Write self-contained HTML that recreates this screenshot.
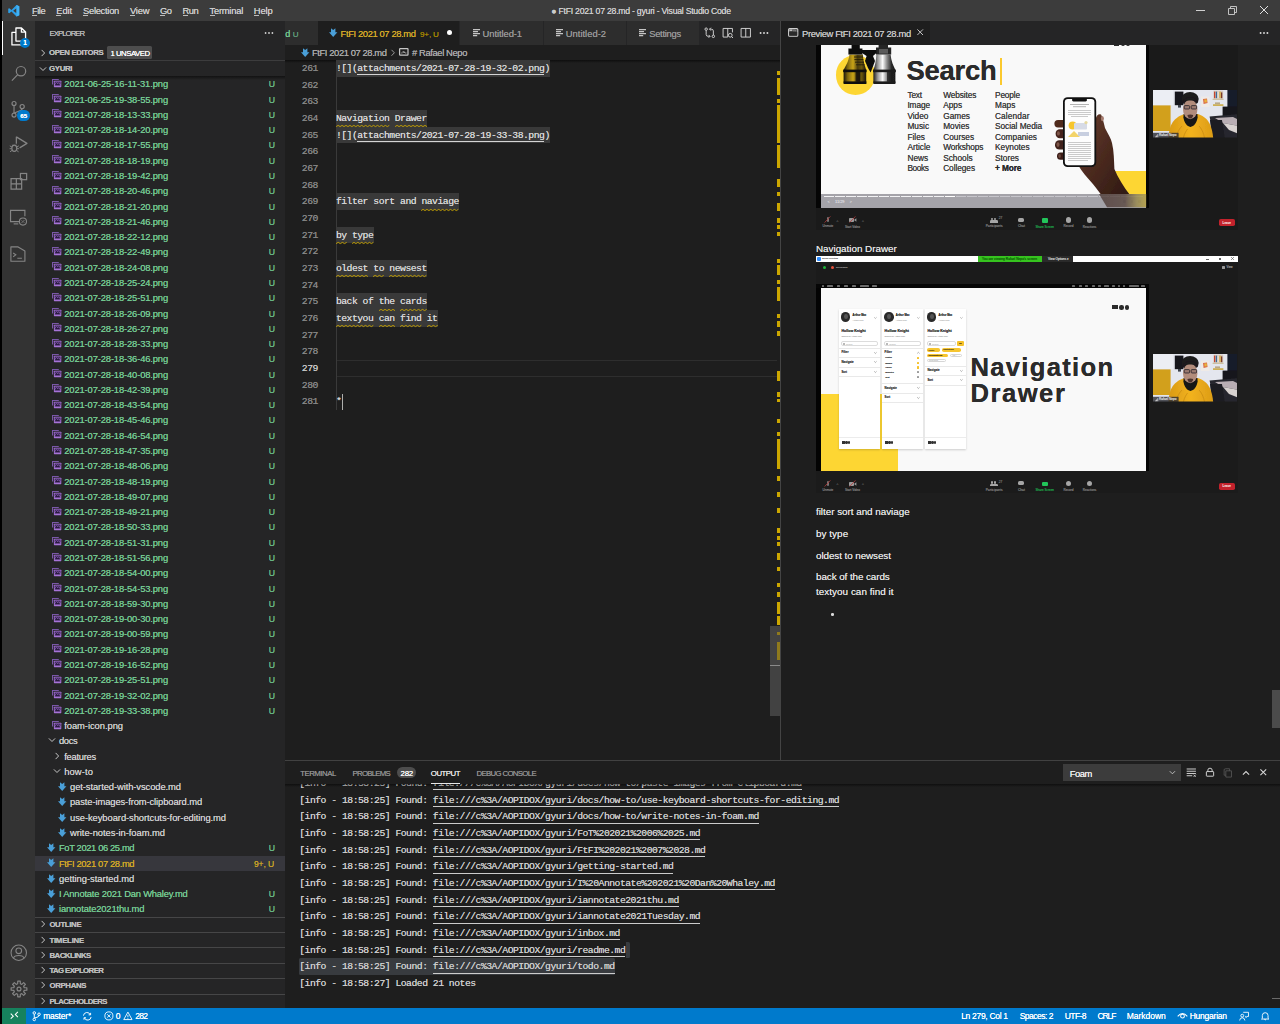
<!DOCTYPE html>
<html lang="en"><head><meta charset="utf-8"><title>FtFI 2021 07 28.md - gyuri - Visual Studio Code</title>
<style>
html,body{margin:0;padding:0;background:#1e1e1e;}
body{width:1280px;height:1024px;overflow:hidden;position:relative;font-family:"Liberation Sans",sans-serif;}
#app{position:absolute;left:0;top:0;width:1280px;height:1024px;overflow:hidden;}
#app div,#app span,#app svg{position:absolute;display:block;white-space:pre;}
#app svg{overflow:visible;}
#app span{text-shadow:0 0 0.4px;}
#app .clip{overflow:hidden;}
</style></head><body><div id="app">
<div style="left:0px;top:0px;width:2px;height:1024px;background:#000;"></div>
<div style="left:2px;top:0px;width:1278px;height:21px;background:#3c3c3c;"></div>
<div style="left:2px;top:21px;width:33px;height:987px;background:#333333;"></div>
<div style="left:35px;top:21px;width:250px;height:987px;background:#252526;"></div>
<div style="left:285px;top:21px;width:995px;height:987px;background:#1e1e1e;"></div>
<svg style="left:8px;top:5px;" width="11.5" height="11.5" viewBox="0 0 100 100"><path d="M74 1 L30 44 L11 29 L2 33 L2 67 L11 71 L30 56 L74 99 L98 89 L98 11 Z M74 29 L74 71 L45 50 Z" fill="#2d9fe8" fill-rule="evenodd"/><path d="M74 1 L98 11 L98 89 L74 99 Z" fill="#3fb1f5"/></svg>
<span style="left:32.00px;top:6.00px;font-size:9.4px;line-height:9.4px;color:#cccccc;letter-spacing:-0.477px;">File</span>
<div style="left:32px;top:15px;width:5.2px;height:0.8px;background:#bdbdbd;"></div>
<span style="left:56.30px;top:6.00px;font-size:9.4px;line-height:9.4px;color:#cccccc;letter-spacing:-0.114px;">Edit</span>
<div style="left:56.3px;top:15px;width:5.2px;height:0.8px;background:#bdbdbd;"></div>
<span style="left:83.00px;top:6.00px;font-size:9.4px;line-height:9.4px;color:#cccccc;letter-spacing:-0.286px;">Selection</span>
<div style="left:83px;top:15px;width:5.2px;height:0.8px;background:#bdbdbd;"></div>
<span style="left:130.00px;top:6.00px;font-size:9.4px;line-height:9.4px;color:#cccccc;letter-spacing:-0.214px;">View</span>
<div style="left:130px;top:15px;width:5.2px;height:0.8px;background:#bdbdbd;"></div>
<span style="left:160.00px;top:6.00px;font-size:9.4px;line-height:9.4px;color:#cccccc;letter-spacing:-0.608px;">Go</span>
<div style="left:160px;top:15px;width:5.2px;height:0.8px;background:#bdbdbd;"></div>
<span style="left:182.50px;top:6.00px;font-size:9.4px;line-height:9.4px;color:#cccccc;letter-spacing:-0.468px;">Run</span>
<div style="left:182.5px;top:15px;width:5.2px;height:0.8px;background:#bdbdbd;"></div>
<span style="left:209.50px;top:6.00px;font-size:9.4px;line-height:9.4px;color:#cccccc;letter-spacing:-0.242px;">Terminal</span>
<div style="left:209.5px;top:15px;width:5px;height:0.8px;background:#bdbdbd;"></div>
<span style="left:253.80px;top:6.00px;font-size:9.4px;line-height:9.4px;color:#cccccc;letter-spacing:-0.145px;">Help</span>
<div style="left:253.8px;top:15px;width:5.2px;height:0.8px;background:#bdbdbd;"></div>
<span style="left:551.30px;top:7.00px;font-size:8.7px;line-height:8.7px;color:#cccccc;letter-spacing:-0.245px;">● FtFI 2021 07 28.md - gyuri - Visual Studio Code</span>
<div style="left:1196px;top:9.5px;width:8.5px;height:1px;background:#d0d0d0;"></div>
<svg style="left:1228px;top:5.5px;" width="9" height="9" viewBox="0 0 9 9"><path d="M0.5 2.5 H6.5 V8.5 H0.5 Z M2.5 2.5 V0.5 H8.5 V6.5 H6.5" fill="none" stroke="#d0d0d0" stroke-width="0.9"/></svg>
<svg style="left:1260px;top:6px;" width="8" height="8" viewBox="0 0 8 8"><path d="M0 0 L8 8 M8 0 L0 8" stroke="#e0e0e0" stroke-width="1"/></svg>
<div style="left:2px;top:21px;width:1.3px;height:33.5px;background:#ffffff;"></div>
<svg style="left:9px;top:27.2px;" width="19.6" height="19.6" viewBox="0 0 24 24"><path d="M8.5 1.2 H15.3 L20.3 6.2 V17.3 H8.5 Z M15.2 1.4 V6.3 H20.2 M8.3 6.5 H3.6 V22 H15.3 V17.5" fill="none" stroke="#ffffff" stroke-width="1.6" stroke-linejoin="round"/></svg>
<div style="left:19.5px;top:37.5px;width:10.6px;height:10.6px;border-radius:50%;background:#007acc;"></div>
<span style="left:23.20px;top:40.00px;font-size:6.4px;line-height:6.4px;color:#fff;font-weight:700;">1</span>
<svg style="left:9.6px;top:63.8px;" width="18.2" height="18.2" viewBox="0 0 24 24"><circle cx="14.5" cy="9.5" r="6.2" fill="none" stroke="#858585" stroke-width="1.6"/><path d="M10.2 14 L2.5 22" stroke="#858585" stroke-width="1.6"/></svg>
<svg style="left:9.3px;top:100.2px;" width="18.6" height="18.6" viewBox="0 0 24 24"><circle cx="6.5" cy="4.5" r="2.6" fill="none" stroke="#858585" stroke-width="1.5"/><circle cx="6.5" cy="19.5" r="2.6" fill="none" stroke="#858585" stroke-width="1.5"/><circle cx="17" cy="8.5" r="2.7" fill="none" stroke="#858585" stroke-width="1.5"/><path d="M6.5 7.1 V16.9 M17 11.1 C17 15 11 14 7 17" fill="none" stroke="#858585" stroke-width="1.5"/></svg>
<div style="left:17.2px;top:110.2px;width:13px;height:10.4px;border-radius:5.2px;background:#007acc;"></div>
<span style="left:20.20px;top:113.00px;font-size:6.2px;line-height:6.2px;color:#fff;font-weight:700;">65</span>
<svg style="left:8.6px;top:134.2px;" width="19.6" height="19.6" viewBox="0 0 24 24"><path d="M9 3.5 L22 11.5 L13 17" fill="none" stroke="#858585" stroke-width="1.5" stroke-linejoin="round"/><path d="M9 3.5 V12" stroke="#858585" stroke-width="1.5"/><ellipse cx="6.5" cy="17.5" rx="3" ry="3.8" fill="none" stroke="#858585" stroke-width="1.4"/><path d="M1 14.5 L3.5 16 M12 14.5 L9.5 16 M0.8 18 H3.4 M9.6 18 H12.2 M1.3 21.8 L3.8 20 M11.7 21.8 L9.2 20 M4.3 13.2 L5.2 14.2 M8.7 13.2 L7.8 14.2" stroke="#858585" stroke-width="1.2"/></svg>
<svg style="left:8.6px;top:171.6px;" width="19.6" height="19.6" viewBox="0 0 24 24"><path d="M2.5 8 H15.5 V21 H2.5 Z M9 8 V21 M2.5 14.5 H15.5" fill="none" stroke="#858585" stroke-width="1.5"/><rect x="14" y="1.8" width="7.6" height="7.6" fill="none" stroke="#858585" stroke-width="1.5"/></svg>
<svg style="left:8.8px;top:208.2px;" width="18.6" height="18.6" viewBox="0 0 24 24"><path d="M14 17.5 H2 V3 H20.5 V10.5" fill="none" stroke="#858585" stroke-width="1.5"/><path d="M6 20.5 H12" stroke="#858585" stroke-width="1.5"/><circle cx="18" cy="17.5" r="4.6" fill="none" stroke="#858585" stroke-width="1.4"/><path d="M16 19.5 L20 15.5 M16.2 16 L17.6 17.4 M18.4 17.6 L19.8 19" stroke="#858585" stroke-width="1"/></svg>
<svg style="left:9px;top:244.6px;" width="18.2" height="18.2" viewBox="0 0 24 24"><path d="M2.5 2.5 H12 L21 8 V21.5 H2.5 Z" fill="none" stroke="#858585" stroke-width="1.5" stroke-linejoin="round"/><path d="M5.5 10.5 L9 13 L5.5 15.5 M11 17.5 H17" fill="none" stroke="#858585" stroke-width="1.4"/></svg>
<svg style="left:10px;top:943.5px;" width="17.5" height="17.5" viewBox="0 0 24 24"><circle cx="12" cy="12" r="10.6" fill="none" stroke="#858585" stroke-width="1.5"/><circle cx="12" cy="9.3" r="3.9" fill="none" stroke="#858585" stroke-width="1.5"/><path d="M4.8 19.5 C6 14.5 18 14.5 19.2 19.5" fill="none" stroke="#858585" stroke-width="1.5"/></svg>
<svg style="left:10px;top:979.5px;" width="18" height="18" viewBox="0 0 24 24"><path d="M22.47 10.34 L22.47 13.66 L18.97 13.79 L18.20 15.67 L20.58 18.23 L18.23 20.58 L15.67 18.20 L13.79 18.97 L13.66 22.47 L10.34 22.47 L10.21 18.97 L8.33 18.20 L5.77 20.58 L3.42 18.23 L5.80 15.67 L5.03 13.79 L1.53 13.66 L1.53 10.34 L5.03 10.21 L5.80 8.33 L3.42 5.77 L5.77 3.42 L8.33 5.80 L10.21 5.03 L10.34 1.53 L13.66 1.53 L13.79 5.03 L15.67 5.80 L18.23 3.42 L20.58 5.77 L18.20 8.33 L18.97 10.21 Z" fill="none" stroke="#858585" stroke-width="1.6" stroke-linejoin="round"/><circle cx="12" cy="12" r="2.6" fill="none" stroke="#858585" stroke-width="1.6"/></svg>
<span style="left:49.50px;top:30.00px;font-size:7.8px;line-height:7.8px;color:#bbbbbb;letter-spacing:-0.971px;">EXPLORER</span>
<svg style="left:263.8px;top:31.2px;" width="10" height="4" viewBox="0 0 10 4"><circle cx="1.6" cy="2" r="0.9" fill="#d0d0d0"/><circle cx="5" cy="2" r="0.9" fill="#d0d0d0"/><circle cx="8.4" cy="2" r="0.9" fill="#d0d0d0"/></svg>
<svg style="left:40.2px;top:48.6px;" width="6" height="8" viewBox="0 0 6 8"><path d="M1.6 0.9 L4.6 4 L1.6 7.1" fill="none" stroke="#c5c5c5" stroke-width="1"/></svg>
<span style="left:49.00px;top:49.00px;font-size:7.8px;line-height:7.8px;color:#bbbbbb;font-weight:700;letter-spacing:-0.373px;">OPEN EDITORS</span>
<div style="left:107px;top:46.4px;width:45px;height:12.6px;background:#4d4d4d;border-radius:1.5px;"></div>
<span style="left:110.40px;top:50.00px;font-size:7.8px;line-height:7.8px;color:#ffffff;letter-spacing:-0.492px;">1 UNSAVED</span>
<div style="left:35px;top:60.3px;width:250px;height:0.8px;background:#3c3c3d;"></div>
<svg style="left:39px;top:65.7px;" width="8" height="6" viewBox="0 0 8 6"><path d="M0.9 1.4 L4 4.5 L7.1 1.4" fill="none" stroke="#c5c5c5" stroke-width="1"/></svg>
<span style="left:49.00px;top:65.00px;font-size:7.8px;line-height:7.8px;color:#bbbbbb;font-weight:700;letter-spacing:-0.301px;">GYURI</span>
<div style="left:35px;top:76.2px;width:250px;height:3.5px;background:linear-gradient(#0f0f0f,rgba(15,15,15,0));opacity:.85"></div>
<svg style="left:51.8px;top:78.9192px;" width="9.4" height="8.4" viewBox="0 0 9.4 8.4"><path d="M0.55 5.6 V0.55 H6.8" fill="none" stroke="#7a58a8" stroke-width="1.1"/><rect x="1.9" y="1.7" width="7.4" height="6.5" rx="0.5" fill="#a673d6"/><path d="M2.6 5.6 L4.4 3.2 L5.6 4.6 L6.6 3.6 L8.6 5.8 L8.6 4.2 L8.6 2.4 L2.6 2.4 Z" fill="#3b2558" opacity=".9"/><path d="M2.6 6.6 L4.4 3.6 L5.6 5 L6.6 4 L8.6 6.4 Z" fill="#2a1a40"/></svg>
<span style="left:64.30px;top:79.00px;font-size:9.4px;line-height:9.4px;color:#73c991;letter-spacing:-0.107px;">2021-06-25-16-11-31.png</span>
<span style="left:268.80px;top:80.00px;font-size:8.7px;line-height:8.7px;color:#69b985;letter-spacing:-1.181px;">U</span>
<svg style="left:51.8px;top:94.1975px;" width="9.4" height="8.4" viewBox="0 0 9.4 8.4"><path d="M0.55 5.6 V0.55 H6.8" fill="none" stroke="#7a58a8" stroke-width="1.1"/><rect x="1.9" y="1.7" width="7.4" height="6.5" rx="0.5" fill="#a673d6"/><path d="M2.6 5.6 L4.4 3.2 L5.6 4.6 L6.6 3.6 L8.6 5.8 L8.6 4.2 L8.6 2.4 L2.6 2.4 Z" fill="#3b2558" opacity=".9"/><path d="M2.6 6.6 L4.4 3.6 L5.6 5 L6.6 4 L8.6 6.4 Z" fill="#2a1a40"/></svg>
<span style="left:64.30px;top:95.00px;font-size:9.4px;line-height:9.4px;color:#73c991;letter-spacing:-0.137px;">2021-06-25-19-38-55.png</span>
<span style="left:268.80px;top:96.00px;font-size:8.7px;line-height:8.7px;color:#69b985;letter-spacing:-1.181px;">U</span>
<svg style="left:51.8px;top:109.476px;" width="9.4" height="8.4" viewBox="0 0 9.4 8.4"><path d="M0.55 5.6 V0.55 H6.8" fill="none" stroke="#7a58a8" stroke-width="1.1"/><rect x="1.9" y="1.7" width="7.4" height="6.5" rx="0.5" fill="#a673d6"/><path d="M2.6 5.6 L4.4 3.2 L5.6 4.6 L6.6 3.6 L8.6 5.8 L8.6 4.2 L8.6 2.4 L2.6 2.4 Z" fill="#3b2558" opacity=".9"/><path d="M2.6 6.6 L4.4 3.6 L5.6 5 L6.6 4 L8.6 6.4 Z" fill="#2a1a40"/></svg>
<span style="left:64.30px;top:110.00px;font-size:9.4px;line-height:9.4px;color:#73c991;letter-spacing:-0.137px;">2021-07-28-18-13-33.png</span>
<span style="left:268.80px;top:111.00px;font-size:8.7px;line-height:8.7px;color:#69b985;letter-spacing:-1.181px;">U</span>
<svg style="left:51.8px;top:124.754px;" width="9.4" height="8.4" viewBox="0 0 9.4 8.4"><path d="M0.55 5.6 V0.55 H6.8" fill="none" stroke="#7a58a8" stroke-width="1.1"/><rect x="1.9" y="1.7" width="7.4" height="6.5" rx="0.5" fill="#a673d6"/><path d="M2.6 5.6 L4.4 3.2 L5.6 4.6 L6.6 3.6 L8.6 5.8 L8.6 4.2 L8.6 2.4 L2.6 2.4 Z" fill="#3b2558" opacity=".9"/><path d="M2.6 6.6 L4.4 3.6 L5.6 5 L6.6 4 L8.6 6.4 Z" fill="#2a1a40"/></svg>
<span style="left:64.30px;top:125.00px;font-size:9.4px;line-height:9.4px;color:#73c991;letter-spacing:-0.137px;">2021-07-28-18-14-20.png</span>
<span style="left:268.80px;top:126.00px;font-size:8.7px;line-height:8.7px;color:#69b985;letter-spacing:-1.181px;">U</span>
<svg style="left:51.8px;top:140.032px;" width="9.4" height="8.4" viewBox="0 0 9.4 8.4"><path d="M0.55 5.6 V0.55 H6.8" fill="none" stroke="#7a58a8" stroke-width="1.1"/><rect x="1.9" y="1.7" width="7.4" height="6.5" rx="0.5" fill="#a673d6"/><path d="M2.6 5.6 L4.4 3.2 L5.6 4.6 L6.6 3.6 L8.6 5.8 L8.6 4.2 L8.6 2.4 L2.6 2.4 Z" fill="#3b2558" opacity=".9"/><path d="M2.6 6.6 L4.4 3.6 L5.6 5 L6.6 4 L8.6 6.4 Z" fill="#2a1a40"/></svg>
<span style="left:64.30px;top:140.00px;font-size:9.4px;line-height:9.4px;color:#73c991;letter-spacing:-0.137px;">2021-07-28-18-17-55.png</span>
<span style="left:268.80px;top:141.00px;font-size:8.7px;line-height:8.7px;color:#69b985;letter-spacing:-1.181px;">U</span>
<svg style="left:51.8px;top:155.311px;" width="9.4" height="8.4" viewBox="0 0 9.4 8.4"><path d="M0.55 5.6 V0.55 H6.8" fill="none" stroke="#7a58a8" stroke-width="1.1"/><rect x="1.9" y="1.7" width="7.4" height="6.5" rx="0.5" fill="#a673d6"/><path d="M2.6 5.6 L4.4 3.2 L5.6 4.6 L6.6 3.6 L8.6 5.8 L8.6 4.2 L8.6 2.4 L2.6 2.4 Z" fill="#3b2558" opacity=".9"/><path d="M2.6 6.6 L4.4 3.6 L5.6 5 L6.6 4 L8.6 6.4 Z" fill="#2a1a40"/></svg>
<span style="left:64.30px;top:156.00px;font-size:9.4px;line-height:9.4px;color:#73c991;letter-spacing:-0.137px;">2021-07-28-18-18-19.png</span>
<span style="left:268.80px;top:157.00px;font-size:8.7px;line-height:8.7px;color:#69b985;letter-spacing:-1.181px;">U</span>
<svg style="left:51.8px;top:170.589px;" width="9.4" height="8.4" viewBox="0 0 9.4 8.4"><path d="M0.55 5.6 V0.55 H6.8" fill="none" stroke="#7a58a8" stroke-width="1.1"/><rect x="1.9" y="1.7" width="7.4" height="6.5" rx="0.5" fill="#a673d6"/><path d="M2.6 5.6 L4.4 3.2 L5.6 4.6 L6.6 3.6 L8.6 5.8 L8.6 4.2 L8.6 2.4 L2.6 2.4 Z" fill="#3b2558" opacity=".9"/><path d="M2.6 6.6 L4.4 3.6 L5.6 5 L6.6 4 L8.6 6.4 Z" fill="#2a1a40"/></svg>
<span style="left:64.30px;top:171.00px;font-size:9.4px;line-height:9.4px;color:#73c991;letter-spacing:-0.137px;">2021-07-28-18-19-42.png</span>
<span style="left:268.80px;top:172.00px;font-size:8.7px;line-height:8.7px;color:#69b985;letter-spacing:-1.181px;">U</span>
<svg style="left:51.8px;top:185.867px;" width="9.4" height="8.4" viewBox="0 0 9.4 8.4"><path d="M0.55 5.6 V0.55 H6.8" fill="none" stroke="#7a58a8" stroke-width="1.1"/><rect x="1.9" y="1.7" width="7.4" height="6.5" rx="0.5" fill="#a673d6"/><path d="M2.6 5.6 L4.4 3.2 L5.6 4.6 L6.6 3.6 L8.6 5.8 L8.6 4.2 L8.6 2.4 L2.6 2.4 Z" fill="#3b2558" opacity=".9"/><path d="M2.6 6.6 L4.4 3.6 L5.6 5 L6.6 4 L8.6 6.4 Z" fill="#2a1a40"/></svg>
<span style="left:64.30px;top:186.00px;font-size:9.4px;line-height:9.4px;color:#73c991;letter-spacing:-0.137px;">2021-07-28-18-20-46.png</span>
<span style="left:268.80px;top:187.00px;font-size:8.7px;line-height:8.7px;color:#69b985;letter-spacing:-1.181px;">U</span>
<svg style="left:51.8px;top:201.146px;" width="9.4" height="8.4" viewBox="0 0 9.4 8.4"><path d="M0.55 5.6 V0.55 H6.8" fill="none" stroke="#7a58a8" stroke-width="1.1"/><rect x="1.9" y="1.7" width="7.4" height="6.5" rx="0.5" fill="#a673d6"/><path d="M2.6 5.6 L4.4 3.2 L5.6 4.6 L6.6 3.6 L8.6 5.8 L8.6 4.2 L8.6 2.4 L2.6 2.4 Z" fill="#3b2558" opacity=".9"/><path d="M2.6 6.6 L4.4 3.6 L5.6 5 L6.6 4 L8.6 6.4 Z" fill="#2a1a40"/></svg>
<span style="left:64.30px;top:202.00px;font-size:9.4px;line-height:9.4px;color:#73c991;letter-spacing:-0.137px;">2021-07-28-18-21-20.png</span>
<span style="left:268.80px;top:203.00px;font-size:8.7px;line-height:8.7px;color:#69b985;letter-spacing:-1.181px;">U</span>
<svg style="left:51.8px;top:216.424px;" width="9.4" height="8.4" viewBox="0 0 9.4 8.4"><path d="M0.55 5.6 V0.55 H6.8" fill="none" stroke="#7a58a8" stroke-width="1.1"/><rect x="1.9" y="1.7" width="7.4" height="6.5" rx="0.5" fill="#a673d6"/><path d="M2.6 5.6 L4.4 3.2 L5.6 4.6 L6.6 3.6 L8.6 5.8 L8.6 4.2 L8.6 2.4 L2.6 2.4 Z" fill="#3b2558" opacity=".9"/><path d="M2.6 6.6 L4.4 3.6 L5.6 5 L6.6 4 L8.6 6.4 Z" fill="#2a1a40"/></svg>
<span style="left:64.30px;top:217.00px;font-size:9.4px;line-height:9.4px;color:#73c991;letter-spacing:-0.137px;">2021-07-28-18-21-46.png</span>
<span style="left:268.80px;top:218.00px;font-size:8.7px;line-height:8.7px;color:#69b985;letter-spacing:-1.181px;">U</span>
<svg style="left:51.8px;top:231.702px;" width="9.4" height="8.4" viewBox="0 0 9.4 8.4"><path d="M0.55 5.6 V0.55 H6.8" fill="none" stroke="#7a58a8" stroke-width="1.1"/><rect x="1.9" y="1.7" width="7.4" height="6.5" rx="0.5" fill="#a673d6"/><path d="M2.6 5.6 L4.4 3.2 L5.6 4.6 L6.6 3.6 L8.6 5.8 L8.6 4.2 L8.6 2.4 L2.6 2.4 Z" fill="#3b2558" opacity=".9"/><path d="M2.6 6.6 L4.4 3.6 L5.6 5 L6.6 4 L8.6 6.4 Z" fill="#2a1a40"/></svg>
<span style="left:64.30px;top:232.00px;font-size:9.4px;line-height:9.4px;color:#73c991;letter-spacing:-0.137px;">2021-07-28-18-22-12.png</span>
<span style="left:268.80px;top:233.00px;font-size:8.7px;line-height:8.7px;color:#69b985;letter-spacing:-1.181px;">U</span>
<svg style="left:51.8px;top:246.98px;" width="9.4" height="8.4" viewBox="0 0 9.4 8.4"><path d="M0.55 5.6 V0.55 H6.8" fill="none" stroke="#7a58a8" stroke-width="1.1"/><rect x="1.9" y="1.7" width="7.4" height="6.5" rx="0.5" fill="#a673d6"/><path d="M2.6 5.6 L4.4 3.2 L5.6 4.6 L6.6 3.6 L8.6 5.8 L8.6 4.2 L8.6 2.4 L2.6 2.4 Z" fill="#3b2558" opacity=".9"/><path d="M2.6 6.6 L4.4 3.6 L5.6 5 L6.6 4 L8.6 6.4 Z" fill="#2a1a40"/></svg>
<span style="left:64.30px;top:247.00px;font-size:9.4px;line-height:9.4px;color:#73c991;letter-spacing:-0.137px;">2021-07-28-18-22-49.png</span>
<span style="left:268.80px;top:248.00px;font-size:8.7px;line-height:8.7px;color:#69b985;letter-spacing:-1.181px;">U</span>
<svg style="left:51.8px;top:262.259px;" width="9.4" height="8.4" viewBox="0 0 9.4 8.4"><path d="M0.55 5.6 V0.55 H6.8" fill="none" stroke="#7a58a8" stroke-width="1.1"/><rect x="1.9" y="1.7" width="7.4" height="6.5" rx="0.5" fill="#a673d6"/><path d="M2.6 5.6 L4.4 3.2 L5.6 4.6 L6.6 3.6 L8.6 5.8 L8.6 4.2 L8.6 2.4 L2.6 2.4 Z" fill="#3b2558" opacity=".9"/><path d="M2.6 6.6 L4.4 3.6 L5.6 5 L6.6 4 L8.6 6.4 Z" fill="#2a1a40"/></svg>
<span style="left:64.30px;top:263.00px;font-size:9.4px;line-height:9.4px;color:#73c991;letter-spacing:-0.137px;">2021-07-28-18-24-08.png</span>
<span style="left:268.80px;top:264.00px;font-size:8.7px;line-height:8.7px;color:#69b985;letter-spacing:-1.181px;">U</span>
<svg style="left:51.8px;top:277.537px;" width="9.4" height="8.4" viewBox="0 0 9.4 8.4"><path d="M0.55 5.6 V0.55 H6.8" fill="none" stroke="#7a58a8" stroke-width="1.1"/><rect x="1.9" y="1.7" width="7.4" height="6.5" rx="0.5" fill="#a673d6"/><path d="M2.6 5.6 L4.4 3.2 L5.6 4.6 L6.6 3.6 L8.6 5.8 L8.6 4.2 L8.6 2.4 L2.6 2.4 Z" fill="#3b2558" opacity=".9"/><path d="M2.6 6.6 L4.4 3.6 L5.6 5 L6.6 4 L8.6 6.4 Z" fill="#2a1a40"/></svg>
<span style="left:64.30px;top:278.00px;font-size:9.4px;line-height:9.4px;color:#73c991;letter-spacing:-0.137px;">2021-07-28-18-25-24.png</span>
<span style="left:268.80px;top:279.00px;font-size:8.7px;line-height:8.7px;color:#69b985;letter-spacing:-1.181px;">U</span>
<svg style="left:51.8px;top:292.815px;" width="9.4" height="8.4" viewBox="0 0 9.4 8.4"><path d="M0.55 5.6 V0.55 H6.8" fill="none" stroke="#7a58a8" stroke-width="1.1"/><rect x="1.9" y="1.7" width="7.4" height="6.5" rx="0.5" fill="#a673d6"/><path d="M2.6 5.6 L4.4 3.2 L5.6 4.6 L6.6 3.6 L8.6 5.8 L8.6 4.2 L8.6 2.4 L2.6 2.4 Z" fill="#3b2558" opacity=".9"/><path d="M2.6 6.6 L4.4 3.6 L5.6 5 L6.6 4 L8.6 6.4 Z" fill="#2a1a40"/></svg>
<span style="left:64.30px;top:293.00px;font-size:9.4px;line-height:9.4px;color:#73c991;letter-spacing:-0.137px;">2021-07-28-18-25-51.png</span>
<span style="left:268.80px;top:294.00px;font-size:8.7px;line-height:8.7px;color:#69b985;letter-spacing:-1.181px;">U</span>
<svg style="left:51.8px;top:308.094px;" width="9.4" height="8.4" viewBox="0 0 9.4 8.4"><path d="M0.55 5.6 V0.55 H6.8" fill="none" stroke="#7a58a8" stroke-width="1.1"/><rect x="1.9" y="1.7" width="7.4" height="6.5" rx="0.5" fill="#a673d6"/><path d="M2.6 5.6 L4.4 3.2 L5.6 4.6 L6.6 3.6 L8.6 5.8 L8.6 4.2 L8.6 2.4 L2.6 2.4 Z" fill="#3b2558" opacity=".9"/><path d="M2.6 6.6 L4.4 3.6 L5.6 5 L6.6 4 L8.6 6.4 Z" fill="#2a1a40"/></svg>
<span style="left:64.30px;top:309.00px;font-size:9.4px;line-height:9.4px;color:#73c991;letter-spacing:-0.137px;">2021-07-28-18-26-09.png</span>
<span style="left:268.80px;top:310.00px;font-size:8.7px;line-height:8.7px;color:#69b985;letter-spacing:-1.181px;">U</span>
<svg style="left:51.8px;top:323.372px;" width="9.4" height="8.4" viewBox="0 0 9.4 8.4"><path d="M0.55 5.6 V0.55 H6.8" fill="none" stroke="#7a58a8" stroke-width="1.1"/><rect x="1.9" y="1.7" width="7.4" height="6.5" rx="0.5" fill="#a673d6"/><path d="M2.6 5.6 L4.4 3.2 L5.6 4.6 L6.6 3.6 L8.6 5.8 L8.6 4.2 L8.6 2.4 L2.6 2.4 Z" fill="#3b2558" opacity=".9"/><path d="M2.6 6.6 L4.4 3.6 L5.6 5 L6.6 4 L8.6 6.4 Z" fill="#2a1a40"/></svg>
<span style="left:64.30px;top:324.00px;font-size:9.4px;line-height:9.4px;color:#73c991;letter-spacing:-0.137px;">2021-07-28-18-26-27.png</span>
<span style="left:268.80px;top:325.00px;font-size:8.7px;line-height:8.7px;color:#69b985;letter-spacing:-1.181px;">U</span>
<svg style="left:51.8px;top:338.65px;" width="9.4" height="8.4" viewBox="0 0 9.4 8.4"><path d="M0.55 5.6 V0.55 H6.8" fill="none" stroke="#7a58a8" stroke-width="1.1"/><rect x="1.9" y="1.7" width="7.4" height="6.5" rx="0.5" fill="#a673d6"/><path d="M2.6 5.6 L4.4 3.2 L5.6 4.6 L6.6 3.6 L8.6 5.8 L8.6 4.2 L8.6 2.4 L2.6 2.4 Z" fill="#3b2558" opacity=".9"/><path d="M2.6 6.6 L4.4 3.6 L5.6 5 L6.6 4 L8.6 6.4 Z" fill="#2a1a40"/></svg>
<span style="left:64.30px;top:339.00px;font-size:9.4px;line-height:9.4px;color:#73c991;letter-spacing:-0.137px;">2021-07-28-18-28-33.png</span>
<span style="left:268.80px;top:340.00px;font-size:8.7px;line-height:8.7px;color:#69b985;letter-spacing:-1.181px;">U</span>
<svg style="left:51.8px;top:353.929px;" width="9.4" height="8.4" viewBox="0 0 9.4 8.4"><path d="M0.55 5.6 V0.55 H6.8" fill="none" stroke="#7a58a8" stroke-width="1.1"/><rect x="1.9" y="1.7" width="7.4" height="6.5" rx="0.5" fill="#a673d6"/><path d="M2.6 5.6 L4.4 3.2 L5.6 4.6 L6.6 3.6 L8.6 5.8 L8.6 4.2 L8.6 2.4 L2.6 2.4 Z" fill="#3b2558" opacity=".9"/><path d="M2.6 6.6 L4.4 3.6 L5.6 5 L6.6 4 L8.6 6.4 Z" fill="#2a1a40"/></svg>
<span style="left:64.30px;top:354.00px;font-size:9.4px;line-height:9.4px;color:#73c991;letter-spacing:-0.137px;">2021-07-28-18-36-46.png</span>
<span style="left:268.80px;top:355.00px;font-size:8.7px;line-height:8.7px;color:#69b985;letter-spacing:-1.181px;">U</span>
<svg style="left:51.8px;top:369.207px;" width="9.4" height="8.4" viewBox="0 0 9.4 8.4"><path d="M0.55 5.6 V0.55 H6.8" fill="none" stroke="#7a58a8" stroke-width="1.1"/><rect x="1.9" y="1.7" width="7.4" height="6.5" rx="0.5" fill="#a673d6"/><path d="M2.6 5.6 L4.4 3.2 L5.6 4.6 L6.6 3.6 L8.6 5.8 L8.6 4.2 L8.6 2.4 L2.6 2.4 Z" fill="#3b2558" opacity=".9"/><path d="M2.6 6.6 L4.4 3.6 L5.6 5 L6.6 4 L8.6 6.4 Z" fill="#2a1a40"/></svg>
<span style="left:64.30px;top:370.00px;font-size:9.4px;line-height:9.4px;color:#73c991;letter-spacing:-0.137px;">2021-07-28-18-40-08.png</span>
<span style="left:268.80px;top:371.00px;font-size:8.7px;line-height:8.7px;color:#69b985;letter-spacing:-1.181px;">U</span>
<svg style="left:51.8px;top:384.485px;" width="9.4" height="8.4" viewBox="0 0 9.4 8.4"><path d="M0.55 5.6 V0.55 H6.8" fill="none" stroke="#7a58a8" stroke-width="1.1"/><rect x="1.9" y="1.7" width="7.4" height="6.5" rx="0.5" fill="#a673d6"/><path d="M2.6 5.6 L4.4 3.2 L5.6 4.6 L6.6 3.6 L8.6 5.8 L8.6 4.2 L8.6 2.4 L2.6 2.4 Z" fill="#3b2558" opacity=".9"/><path d="M2.6 6.6 L4.4 3.6 L5.6 5 L6.6 4 L8.6 6.4 Z" fill="#2a1a40"/></svg>
<span style="left:64.30px;top:385.00px;font-size:9.4px;line-height:9.4px;color:#73c991;letter-spacing:-0.137px;">2021-07-28-18-42-39.png</span>
<span style="left:268.80px;top:386.00px;font-size:8.7px;line-height:8.7px;color:#69b985;letter-spacing:-1.181px;">U</span>
<svg style="left:51.8px;top:399.763px;" width="9.4" height="8.4" viewBox="0 0 9.4 8.4"><path d="M0.55 5.6 V0.55 H6.8" fill="none" stroke="#7a58a8" stroke-width="1.1"/><rect x="1.9" y="1.7" width="7.4" height="6.5" rx="0.5" fill="#a673d6"/><path d="M2.6 5.6 L4.4 3.2 L5.6 4.6 L6.6 3.6 L8.6 5.8 L8.6 4.2 L8.6 2.4 L2.6 2.4 Z" fill="#3b2558" opacity=".9"/><path d="M2.6 6.6 L4.4 3.6 L5.6 5 L6.6 4 L8.6 6.4 Z" fill="#2a1a40"/></svg>
<span style="left:64.30px;top:400.00px;font-size:9.4px;line-height:9.4px;color:#73c991;letter-spacing:-0.137px;">2021-07-28-18-43-54.png</span>
<span style="left:268.80px;top:401.00px;font-size:8.7px;line-height:8.7px;color:#69b985;letter-spacing:-1.181px;">U</span>
<svg style="left:51.8px;top:415.042px;" width="9.4" height="8.4" viewBox="0 0 9.4 8.4"><path d="M0.55 5.6 V0.55 H6.8" fill="none" stroke="#7a58a8" stroke-width="1.1"/><rect x="1.9" y="1.7" width="7.4" height="6.5" rx="0.5" fill="#a673d6"/><path d="M2.6 5.6 L4.4 3.2 L5.6 4.6 L6.6 3.6 L8.6 5.8 L8.6 4.2 L8.6 2.4 L2.6 2.4 Z" fill="#3b2558" opacity=".9"/><path d="M2.6 6.6 L4.4 3.6 L5.6 5 L6.6 4 L8.6 6.4 Z" fill="#2a1a40"/></svg>
<span style="left:64.30px;top:415.00px;font-size:9.4px;line-height:9.4px;color:#73c991;letter-spacing:-0.137px;">2021-07-28-18-45-46.png</span>
<span style="left:268.80px;top:416.00px;font-size:8.7px;line-height:8.7px;color:#69b985;letter-spacing:-1.181px;">U</span>
<svg style="left:51.8px;top:430.32px;" width="9.4" height="8.4" viewBox="0 0 9.4 8.4"><path d="M0.55 5.6 V0.55 H6.8" fill="none" stroke="#7a58a8" stroke-width="1.1"/><rect x="1.9" y="1.7" width="7.4" height="6.5" rx="0.5" fill="#a673d6"/><path d="M2.6 5.6 L4.4 3.2 L5.6 4.6 L6.6 3.6 L8.6 5.8 L8.6 4.2 L8.6 2.4 L2.6 2.4 Z" fill="#3b2558" opacity=".9"/><path d="M2.6 6.6 L4.4 3.6 L5.6 5 L6.6 4 L8.6 6.4 Z" fill="#2a1a40"/></svg>
<span style="left:64.30px;top:431.00px;font-size:9.4px;line-height:9.4px;color:#73c991;letter-spacing:-0.137px;">2021-07-28-18-46-54.png</span>
<span style="left:268.80px;top:432.00px;font-size:8.7px;line-height:8.7px;color:#69b985;letter-spacing:-1.181px;">U</span>
<svg style="left:51.8px;top:445.598px;" width="9.4" height="8.4" viewBox="0 0 9.4 8.4"><path d="M0.55 5.6 V0.55 H6.8" fill="none" stroke="#7a58a8" stroke-width="1.1"/><rect x="1.9" y="1.7" width="7.4" height="6.5" rx="0.5" fill="#a673d6"/><path d="M2.6 5.6 L4.4 3.2 L5.6 4.6 L6.6 3.6 L8.6 5.8 L8.6 4.2 L8.6 2.4 L2.6 2.4 Z" fill="#3b2558" opacity=".9"/><path d="M2.6 6.6 L4.4 3.6 L5.6 5 L6.6 4 L8.6 6.4 Z" fill="#2a1a40"/></svg>
<span style="left:64.30px;top:446.00px;font-size:9.4px;line-height:9.4px;color:#73c991;letter-spacing:-0.137px;">2021-07-28-18-47-35.png</span>
<span style="left:268.80px;top:447.00px;font-size:8.7px;line-height:8.7px;color:#69b985;letter-spacing:-1.181px;">U</span>
<svg style="left:51.8px;top:460.877px;" width="9.4" height="8.4" viewBox="0 0 9.4 8.4"><path d="M0.55 5.6 V0.55 H6.8" fill="none" stroke="#7a58a8" stroke-width="1.1"/><rect x="1.9" y="1.7" width="7.4" height="6.5" rx="0.5" fill="#a673d6"/><path d="M2.6 5.6 L4.4 3.2 L5.6 4.6 L6.6 3.6 L8.6 5.8 L8.6 4.2 L8.6 2.4 L2.6 2.4 Z" fill="#3b2558" opacity=".9"/><path d="M2.6 6.6 L4.4 3.6 L5.6 5 L6.6 4 L8.6 6.4 Z" fill="#2a1a40"/></svg>
<span style="left:64.30px;top:461.00px;font-size:9.4px;line-height:9.4px;color:#73c991;letter-spacing:-0.137px;">2021-07-28-18-48-06.png</span>
<span style="left:268.80px;top:462.00px;font-size:8.7px;line-height:8.7px;color:#69b985;letter-spacing:-1.181px;">U</span>
<svg style="left:51.8px;top:476.155px;" width="9.4" height="8.4" viewBox="0 0 9.4 8.4"><path d="M0.55 5.6 V0.55 H6.8" fill="none" stroke="#7a58a8" stroke-width="1.1"/><rect x="1.9" y="1.7" width="7.4" height="6.5" rx="0.5" fill="#a673d6"/><path d="M2.6 5.6 L4.4 3.2 L5.6 4.6 L6.6 3.6 L8.6 5.8 L8.6 4.2 L8.6 2.4 L2.6 2.4 Z" fill="#3b2558" opacity=".9"/><path d="M2.6 6.6 L4.4 3.6 L5.6 5 L6.6 4 L8.6 6.4 Z" fill="#2a1a40"/></svg>
<span style="left:64.30px;top:477.00px;font-size:9.4px;line-height:9.4px;color:#73c991;letter-spacing:-0.137px;">2021-07-28-18-48-19.png</span>
<span style="left:268.80px;top:478.00px;font-size:8.7px;line-height:8.7px;color:#69b985;letter-spacing:-1.181px;">U</span>
<svg style="left:51.8px;top:491.433px;" width="9.4" height="8.4" viewBox="0 0 9.4 8.4"><path d="M0.55 5.6 V0.55 H6.8" fill="none" stroke="#7a58a8" stroke-width="1.1"/><rect x="1.9" y="1.7" width="7.4" height="6.5" rx="0.5" fill="#a673d6"/><path d="M2.6 5.6 L4.4 3.2 L5.6 4.6 L6.6 3.6 L8.6 5.8 L8.6 4.2 L8.6 2.4 L2.6 2.4 Z" fill="#3b2558" opacity=".9"/><path d="M2.6 6.6 L4.4 3.6 L5.6 5 L6.6 4 L8.6 6.4 Z" fill="#2a1a40"/></svg>
<span style="left:64.30px;top:492.00px;font-size:9.4px;line-height:9.4px;color:#73c991;letter-spacing:-0.137px;">2021-07-28-18-49-07.png</span>
<span style="left:268.80px;top:493.00px;font-size:8.7px;line-height:8.7px;color:#69b985;letter-spacing:-1.181px;">U</span>
<svg style="left:51.8px;top:506.712px;" width="9.4" height="8.4" viewBox="0 0 9.4 8.4"><path d="M0.55 5.6 V0.55 H6.8" fill="none" stroke="#7a58a8" stroke-width="1.1"/><rect x="1.9" y="1.7" width="7.4" height="6.5" rx="0.5" fill="#a673d6"/><path d="M2.6 5.6 L4.4 3.2 L5.6 4.6 L6.6 3.6 L8.6 5.8 L8.6 4.2 L8.6 2.4 L2.6 2.4 Z" fill="#3b2558" opacity=".9"/><path d="M2.6 6.6 L4.4 3.6 L5.6 5 L6.6 4 L8.6 6.4 Z" fill="#2a1a40"/></svg>
<span style="left:64.30px;top:507.00px;font-size:9.4px;line-height:9.4px;color:#73c991;letter-spacing:-0.137px;">2021-07-28-18-49-21.png</span>
<span style="left:268.80px;top:508.00px;font-size:8.7px;line-height:8.7px;color:#69b985;letter-spacing:-1.181px;">U</span>
<svg style="left:51.8px;top:521.99px;" width="9.4" height="8.4" viewBox="0 0 9.4 8.4"><path d="M0.55 5.6 V0.55 H6.8" fill="none" stroke="#7a58a8" stroke-width="1.1"/><rect x="1.9" y="1.7" width="7.4" height="6.5" rx="0.5" fill="#a673d6"/><path d="M2.6 5.6 L4.4 3.2 L5.6 4.6 L6.6 3.6 L8.6 5.8 L8.6 4.2 L8.6 2.4 L2.6 2.4 Z" fill="#3b2558" opacity=".9"/><path d="M2.6 6.6 L4.4 3.6 L5.6 5 L6.6 4 L8.6 6.4 Z" fill="#2a1a40"/></svg>
<span style="left:64.30px;top:522.00px;font-size:9.4px;line-height:9.4px;color:#73c991;letter-spacing:-0.137px;">2021-07-28-18-50-33.png</span>
<span style="left:268.80px;top:523.00px;font-size:8.7px;line-height:8.7px;color:#69b985;letter-spacing:-1.181px;">U</span>
<svg style="left:51.8px;top:537.268px;" width="9.4" height="8.4" viewBox="0 0 9.4 8.4"><path d="M0.55 5.6 V0.55 H6.8" fill="none" stroke="#7a58a8" stroke-width="1.1"/><rect x="1.9" y="1.7" width="7.4" height="6.5" rx="0.5" fill="#a673d6"/><path d="M2.6 5.6 L4.4 3.2 L5.6 4.6 L6.6 3.6 L8.6 5.8 L8.6 4.2 L8.6 2.4 L2.6 2.4 Z" fill="#3b2558" opacity=".9"/><path d="M2.6 6.6 L4.4 3.6 L5.6 5 L6.6 4 L8.6 6.4 Z" fill="#2a1a40"/></svg>
<span style="left:64.30px;top:538.00px;font-size:9.4px;line-height:9.4px;color:#73c991;letter-spacing:-0.137px;">2021-07-28-18-51-31.png</span>
<span style="left:268.80px;top:539.00px;font-size:8.7px;line-height:8.7px;color:#69b985;letter-spacing:-1.181px;">U</span>
<svg style="left:51.8px;top:552.546px;" width="9.4" height="8.4" viewBox="0 0 9.4 8.4"><path d="M0.55 5.6 V0.55 H6.8" fill="none" stroke="#7a58a8" stroke-width="1.1"/><rect x="1.9" y="1.7" width="7.4" height="6.5" rx="0.5" fill="#a673d6"/><path d="M2.6 5.6 L4.4 3.2 L5.6 4.6 L6.6 3.6 L8.6 5.8 L8.6 4.2 L8.6 2.4 L2.6 2.4 Z" fill="#3b2558" opacity=".9"/><path d="M2.6 6.6 L4.4 3.6 L5.6 5 L6.6 4 L8.6 6.4 Z" fill="#2a1a40"/></svg>
<span style="left:64.30px;top:553.00px;font-size:9.4px;line-height:9.4px;color:#73c991;letter-spacing:-0.137px;">2021-07-28-18-51-56.png</span>
<span style="left:268.80px;top:554.00px;font-size:8.7px;line-height:8.7px;color:#69b985;letter-spacing:-1.181px;">U</span>
<svg style="left:51.8px;top:567.825px;" width="9.4" height="8.4" viewBox="0 0 9.4 8.4"><path d="M0.55 5.6 V0.55 H6.8" fill="none" stroke="#7a58a8" stroke-width="1.1"/><rect x="1.9" y="1.7" width="7.4" height="6.5" rx="0.5" fill="#a673d6"/><path d="M2.6 5.6 L4.4 3.2 L5.6 4.6 L6.6 3.6 L8.6 5.8 L8.6 4.2 L8.6 2.4 L2.6 2.4 Z" fill="#3b2558" opacity=".9"/><path d="M2.6 6.6 L4.4 3.6 L5.6 5 L6.6 4 L8.6 6.4 Z" fill="#2a1a40"/></svg>
<span style="left:64.30px;top:568.00px;font-size:9.4px;line-height:9.4px;color:#73c991;letter-spacing:-0.137px;">2021-07-28-18-54-00.png</span>
<span style="left:268.80px;top:569.00px;font-size:8.7px;line-height:8.7px;color:#69b985;letter-spacing:-1.181px;">U</span>
<svg style="left:51.8px;top:583.103px;" width="9.4" height="8.4" viewBox="0 0 9.4 8.4"><path d="M0.55 5.6 V0.55 H6.8" fill="none" stroke="#7a58a8" stroke-width="1.1"/><rect x="1.9" y="1.7" width="7.4" height="6.5" rx="0.5" fill="#a673d6"/><path d="M2.6 5.6 L4.4 3.2 L5.6 4.6 L6.6 3.6 L8.6 5.8 L8.6 4.2 L8.6 2.4 L2.6 2.4 Z" fill="#3b2558" opacity=".9"/><path d="M2.6 6.6 L4.4 3.6 L5.6 5 L6.6 4 L8.6 6.4 Z" fill="#2a1a40"/></svg>
<span style="left:64.30px;top:584.00px;font-size:9.4px;line-height:9.4px;color:#73c991;letter-spacing:-0.137px;">2021-07-28-18-54-53.png</span>
<span style="left:268.80px;top:585.00px;font-size:8.7px;line-height:8.7px;color:#69b985;letter-spacing:-1.181px;">U</span>
<svg style="left:51.8px;top:598.381px;" width="9.4" height="8.4" viewBox="0 0 9.4 8.4"><path d="M0.55 5.6 V0.55 H6.8" fill="none" stroke="#7a58a8" stroke-width="1.1"/><rect x="1.9" y="1.7" width="7.4" height="6.5" rx="0.5" fill="#a673d6"/><path d="M2.6 5.6 L4.4 3.2 L5.6 4.6 L6.6 3.6 L8.6 5.8 L8.6 4.2 L8.6 2.4 L2.6 2.4 Z" fill="#3b2558" opacity=".9"/><path d="M2.6 6.6 L4.4 3.6 L5.6 5 L6.6 4 L8.6 6.4 Z" fill="#2a1a40"/></svg>
<span style="left:64.30px;top:599.00px;font-size:9.4px;line-height:9.4px;color:#73c991;letter-spacing:-0.137px;">2021-07-28-18-59-30.png</span>
<span style="left:268.80px;top:600.00px;font-size:8.7px;line-height:8.7px;color:#69b985;letter-spacing:-1.181px;">U</span>
<svg style="left:51.8px;top:613.66px;" width="9.4" height="8.4" viewBox="0 0 9.4 8.4"><path d="M0.55 5.6 V0.55 H6.8" fill="none" stroke="#7a58a8" stroke-width="1.1"/><rect x="1.9" y="1.7" width="7.4" height="6.5" rx="0.5" fill="#a673d6"/><path d="M2.6 5.6 L4.4 3.2 L5.6 4.6 L6.6 3.6 L8.6 5.8 L8.6 4.2 L8.6 2.4 L2.6 2.4 Z" fill="#3b2558" opacity=".9"/><path d="M2.6 6.6 L4.4 3.6 L5.6 5 L6.6 4 L8.6 6.4 Z" fill="#2a1a40"/></svg>
<span style="left:64.30px;top:614.00px;font-size:9.4px;line-height:9.4px;color:#73c991;letter-spacing:-0.137px;">2021-07-28-19-00-30.png</span>
<span style="left:268.80px;top:615.00px;font-size:8.7px;line-height:8.7px;color:#69b985;letter-spacing:-1.181px;">U</span>
<svg style="left:51.8px;top:628.938px;" width="9.4" height="8.4" viewBox="0 0 9.4 8.4"><path d="M0.55 5.6 V0.55 H6.8" fill="none" stroke="#7a58a8" stroke-width="1.1"/><rect x="1.9" y="1.7" width="7.4" height="6.5" rx="0.5" fill="#a673d6"/><path d="M2.6 5.6 L4.4 3.2 L5.6 4.6 L6.6 3.6 L8.6 5.8 L8.6 4.2 L8.6 2.4 L2.6 2.4 Z" fill="#3b2558" opacity=".9"/><path d="M2.6 6.6 L4.4 3.6 L5.6 5 L6.6 4 L8.6 6.4 Z" fill="#2a1a40"/></svg>
<span style="left:64.30px;top:629.00px;font-size:9.4px;line-height:9.4px;color:#73c991;letter-spacing:-0.137px;">2021-07-28-19-00-59.png</span>
<span style="left:268.80px;top:630.00px;font-size:8.7px;line-height:8.7px;color:#69b985;letter-spacing:-1.181px;">U</span>
<svg style="left:51.8px;top:644.216px;" width="9.4" height="8.4" viewBox="0 0 9.4 8.4"><path d="M0.55 5.6 V0.55 H6.8" fill="none" stroke="#7a58a8" stroke-width="1.1"/><rect x="1.9" y="1.7" width="7.4" height="6.5" rx="0.5" fill="#a673d6"/><path d="M2.6 5.6 L4.4 3.2 L5.6 4.6 L6.6 3.6 L8.6 5.8 L8.6 4.2 L8.6 2.4 L2.6 2.4 Z" fill="#3b2558" opacity=".9"/><path d="M2.6 6.6 L4.4 3.6 L5.6 5 L6.6 4 L8.6 6.4 Z" fill="#2a1a40"/></svg>
<span style="left:64.30px;top:645.00px;font-size:9.4px;line-height:9.4px;color:#73c991;letter-spacing:-0.137px;">2021-07-28-19-16-28.png</span>
<span style="left:268.80px;top:646.00px;font-size:8.7px;line-height:8.7px;color:#69b985;letter-spacing:-1.181px;">U</span>
<svg style="left:51.8px;top:659.495px;" width="9.4" height="8.4" viewBox="0 0 9.4 8.4"><path d="M0.55 5.6 V0.55 H6.8" fill="none" stroke="#7a58a8" stroke-width="1.1"/><rect x="1.9" y="1.7" width="7.4" height="6.5" rx="0.5" fill="#a673d6"/><path d="M2.6 5.6 L4.4 3.2 L5.6 4.6 L6.6 3.6 L8.6 5.8 L8.6 4.2 L8.6 2.4 L2.6 2.4 Z" fill="#3b2558" opacity=".9"/><path d="M2.6 6.6 L4.4 3.6 L5.6 5 L6.6 4 L8.6 6.4 Z" fill="#2a1a40"/></svg>
<span style="left:64.30px;top:660.00px;font-size:9.4px;line-height:9.4px;color:#73c991;letter-spacing:-0.137px;">2021-07-28-19-16-52.png</span>
<span style="left:268.80px;top:661.00px;font-size:8.7px;line-height:8.7px;color:#69b985;letter-spacing:-1.181px;">U</span>
<svg style="left:51.8px;top:674.773px;" width="9.4" height="8.4" viewBox="0 0 9.4 8.4"><path d="M0.55 5.6 V0.55 H6.8" fill="none" stroke="#7a58a8" stroke-width="1.1"/><rect x="1.9" y="1.7" width="7.4" height="6.5" rx="0.5" fill="#a673d6"/><path d="M2.6 5.6 L4.4 3.2 L5.6 4.6 L6.6 3.6 L8.6 5.8 L8.6 4.2 L8.6 2.4 L2.6 2.4 Z" fill="#3b2558" opacity=".9"/><path d="M2.6 6.6 L4.4 3.6 L5.6 5 L6.6 4 L8.6 6.4 Z" fill="#2a1a40"/></svg>
<span style="left:64.30px;top:675.00px;font-size:9.4px;line-height:9.4px;color:#73c991;letter-spacing:-0.137px;">2021-07-28-19-25-51.png</span>
<span style="left:268.80px;top:676.00px;font-size:8.7px;line-height:8.7px;color:#69b985;letter-spacing:-1.181px;">U</span>
<svg style="left:51.8px;top:690.051px;" width="9.4" height="8.4" viewBox="0 0 9.4 8.4"><path d="M0.55 5.6 V0.55 H6.8" fill="none" stroke="#7a58a8" stroke-width="1.1"/><rect x="1.9" y="1.7" width="7.4" height="6.5" rx="0.5" fill="#a673d6"/><path d="M2.6 5.6 L4.4 3.2 L5.6 4.6 L6.6 3.6 L8.6 5.8 L8.6 4.2 L8.6 2.4 L2.6 2.4 Z" fill="#3b2558" opacity=".9"/><path d="M2.6 6.6 L4.4 3.6 L5.6 5 L6.6 4 L8.6 6.4 Z" fill="#2a1a40"/></svg>
<span style="left:64.30px;top:691.00px;font-size:9.4px;line-height:9.4px;color:#73c991;letter-spacing:-0.137px;">2021-07-28-19-32-02.png</span>
<span style="left:268.80px;top:692.00px;font-size:8.7px;line-height:8.7px;color:#69b985;letter-spacing:-1.181px;">U</span>
<svg style="left:51.8px;top:705.329px;" width="9.4" height="8.4" viewBox="0 0 9.4 8.4"><path d="M0.55 5.6 V0.55 H6.8" fill="none" stroke="#7a58a8" stroke-width="1.1"/><rect x="1.9" y="1.7" width="7.4" height="6.5" rx="0.5" fill="#a673d6"/><path d="M2.6 5.6 L4.4 3.2 L5.6 4.6 L6.6 3.6 L8.6 5.8 L8.6 4.2 L8.6 2.4 L2.6 2.4 Z" fill="#3b2558" opacity=".9"/><path d="M2.6 6.6 L4.4 3.6 L5.6 5 L6.6 4 L8.6 6.4 Z" fill="#2a1a40"/></svg>
<span style="left:64.30px;top:706.00px;font-size:9.4px;line-height:9.4px;color:#73c991;letter-spacing:-0.137px;">2021-07-28-19-33-38.png</span>
<span style="left:268.80px;top:707.00px;font-size:8.7px;line-height:8.7px;color:#69b985;letter-spacing:-1.181px;">U</span>
<svg style="left:51.8px;top:720.608px;" width="9.4" height="8.4" viewBox="0 0 9.4 8.4"><path d="M0.55 5.6 V0.55 H6.8" fill="none" stroke="#7a58a8" stroke-width="1.1"/><rect x="1.9" y="1.7" width="7.4" height="6.5" rx="0.5" fill="#a673d6"/><path d="M2.6 5.6 L4.4 3.2 L5.6 4.6 L6.6 3.6 L8.6 5.8 L8.6 4.2 L8.6 2.4 L2.6 2.4 Z" fill="#3b2558" opacity=".9"/><path d="M2.6 6.6 L4.4 3.6 L5.6 5 L6.6 4 L8.6 6.4 Z" fill="#2a1a40"/></svg>
<span style="left:64.20px;top:721.00px;font-size:9.4px;line-height:9.4px;color:#cccccc;letter-spacing:-0.048px;">foam-icon.png</span>
<svg style="left:47.5px;top:737.286px;" width="8" height="6" viewBox="0 0 8 6"><path d="M0.9 1.4 L4 4.5 L7.1 1.4" fill="none" stroke="#c5c5c5" stroke-width="1"/></svg>
<span style="left:59.00px;top:736.00px;font-size:9.4px;line-height:9.4px;color:#cccccc;letter-spacing:-0.353px;">docs</span>
<svg style="left:53.8px;top:751.764px;" width="6" height="8" viewBox="0 0 6 8"><path d="M1.6 0.9 L4.6 4 L1.6 7.1" fill="none" stroke="#c5c5c5" stroke-width="1"/></svg>
<span style="left:64.20px;top:752.00px;font-size:9.4px;line-height:9.4px;color:#cccccc;letter-spacing:-0.259px;">features</span>
<svg style="left:52.6px;top:767.843px;" width="8" height="6" viewBox="0 0 8 6"><path d="M0.9 1.4 L4 4.5 L7.1 1.4" fill="none" stroke="#c5c5c5" stroke-width="1"/></svg>
<span style="left:64.20px;top:767.00px;font-size:9.4px;line-height:9.4px;color:#cccccc;letter-spacing:0.110px;">how-to</span>
<svg style="left:58px;top:782.021px;" width="8.4" height="9" viewBox="0 0 8.4 9"><path d="M2 0.2 L4.2 1.9 L6.4 0.2 V4.2 H8.4 L4.2 8.9 L0 4.2 H2 Z" fill="#4a9fd8"/></svg>
<span style="left:70.00px;top:782.00px;font-size:9.4px;line-height:9.4px;color:#cccccc;letter-spacing:-0.080px;">get-started-with-vscode.md</span>
<svg style="left:58px;top:797.299px;" width="8.4" height="9" viewBox="0 0 8.4 9"><path d="M2 0.2 L4.2 1.9 L6.4 0.2 V4.2 H8.4 L4.2 8.9 L0 4.2 H2 Z" fill="#4a9fd8"/></svg>
<span style="left:70.00px;top:797.00px;font-size:9.4px;line-height:9.4px;color:#cccccc;letter-spacing:-0.098px;">paste-images-from-clipboard.md</span>
<svg style="left:58px;top:812.578px;" width="8.4" height="9" viewBox="0 0 8.4 9"><path d="M2 0.2 L4.2 1.9 L6.4 0.2 V4.2 H8.4 L4.2 8.9 L0 4.2 H2 Z" fill="#4a9fd8"/></svg>
<span style="left:70.00px;top:813.00px;font-size:9.4px;line-height:9.4px;color:#cccccc;letter-spacing:-0.065px;">use-keyboard-shortcuts-for-editing.md</span>
<svg style="left:58px;top:827.856px;" width="8.4" height="9" viewBox="0 0 8.4 9"><path d="M2 0.2 L4.2 1.9 L6.4 0.2 V4.2 H8.4 L4.2 8.9 L0 4.2 H2 Z" fill="#4a9fd8"/></svg>
<span style="left:70.00px;top:828.00px;font-size:9.4px;line-height:9.4px;color:#cccccc;letter-spacing:-0.040px;">write-notes-in-foam.md</span>
<div style="left:35px;top:855.9px;width:250px;height:15.1px;background:#37373d;"></div>
<svg style="left:47.2px;top:843.134px;" width="8.4" height="9" viewBox="0 0 8.4 9"><path d="M2 0.2 L4.2 1.9 L6.4 0.2 V4.2 H8.4 L4.2 8.9 L0 4.2 H2 Z" fill="#4a9fd8"/></svg>
<span style="left:59.00px;top:843.00px;font-size:9.4px;line-height:9.4px;color:#73c991;letter-spacing:-0.380px;">FoT 2021 06 25.md</span>
<span style="left:268.80px;top:844.00px;font-size:8.7px;line-height:8.7px;color:#69b985;letter-spacing:-1.181px;">U</span>
<svg style="left:47.2px;top:858.412px;" width="8.4" height="9" viewBox="0 0 8.4 9"><path d="M2 0.2 L4.2 1.9 L6.4 0.2 V4.2 H8.4 L4.2 8.9 L0 4.2 H2 Z" fill="#4a9fd8"/></svg>
<span style="left:59.00px;top:859.00px;font-size:9.4px;line-height:9.4px;color:#d3a827;letter-spacing:-0.368px;">FtFI 2021 07 28.md</span>
<span style="left:254.00px;top:860.00px;font-size:8.5px;line-height:8.5px;color:#c9a326;letter-spacing:-0.133px;">9+, U</span>
<svg style="left:47.2px;top:873.691px;" width="8.4" height="9" viewBox="0 0 8.4 9"><path d="M2 0.2 L4.2 1.9 L6.4 0.2 V4.2 H8.4 L4.2 8.9 L0 4.2 H2 Z" fill="#4a9fd8"/></svg>
<span style="left:59.00px;top:874.00px;font-size:9.4px;line-height:9.4px;color:#cccccc;letter-spacing:-0.020px;">getting-started.md</span>
<svg style="left:47.2px;top:888.969px;" width="8.4" height="9" viewBox="0 0 8.4 9"><path d="M2 0.2 L4.2 1.9 L6.4 0.2 V4.2 H8.4 L4.2 8.9 L0 4.2 H2 Z" fill="#4a9fd8"/></svg>
<span style="left:59.00px;top:889.00px;font-size:9.4px;line-height:9.4px;color:#73c991;letter-spacing:-0.196px;">I Annotate 2021 Dan Whaley.md</span>
<span style="left:268.80px;top:890.00px;font-size:8.7px;line-height:8.7px;color:#69b985;letter-spacing:-1.181px;">U</span>
<svg style="left:47.2px;top:904.247px;" width="8.4" height="9" viewBox="0 0 8.4 9"><path d="M2 0.2 L4.2 1.9 L6.4 0.2 V4.2 H8.4 L4.2 8.9 L0 4.2 H2 Z" fill="#4a9fd8"/></svg>
<span style="left:59.00px;top:904.00px;font-size:9.4px;line-height:9.4px;color:#73c991;letter-spacing:-0.152px;">iannotate2021thu.md</span>
<span style="left:268.80px;top:905.00px;font-size:8.7px;line-height:8.7px;color:#69b985;letter-spacing:-1.181px;">U</span>
<div style="left:35px;top:917.3px;width:250px;height:0.8px;background:#464647;"></div>
<svg style="left:40.2px;top:920.1px;" width="6" height="8" viewBox="0 0 6 8"><path d="M1.6 0.9 L4.6 4 L1.6 7.1" fill="none" stroke="#c5c5c5" stroke-width="1"/></svg>
<span style="left:49.40px;top:921.00px;font-size:7.8px;line-height:7.8px;color:#bbbbbb;font-weight:700;letter-spacing:-0.331px;">OUTLINE</span>
<div style="left:35px;top:932.3px;width:250px;height:0.8px;background:#464647;"></div>
<svg style="left:40.2px;top:936.1px;" width="6" height="8" viewBox="0 0 6 8"><path d="M1.6 0.9 L4.6 4 L1.6 7.1" fill="none" stroke="#c5c5c5" stroke-width="1"/></svg>
<span style="left:49.40px;top:937.00px;font-size:7.8px;line-height:7.8px;color:#bbbbbb;font-weight:700;letter-spacing:-0.224px;">TIMELINE</span>
<div style="left:35px;top:947.2px;width:250px;height:0.8px;background:#464647;"></div>
<svg style="left:40.2px;top:951.1px;" width="6" height="8" viewBox="0 0 6 8"><path d="M1.6 0.9 L4.6 4 L1.6 7.1" fill="none" stroke="#c5c5c5" stroke-width="1"/></svg>
<span style="left:49.40px;top:952.00px;font-size:7.8px;line-height:7.8px;color:#bbbbbb;font-weight:700;letter-spacing:-0.502px;">BACKLINKS</span>
<div style="left:35px;top:962.7px;width:250px;height:0.8px;background:#464647;"></div>
<svg style="left:40.2px;top:966.1px;" width="6" height="8" viewBox="0 0 6 8"><path d="M1.6 0.9 L4.6 4 L1.6 7.1" fill="none" stroke="#c5c5c5" stroke-width="1"/></svg>
<span style="left:49.40px;top:967.00px;font-size:7.8px;line-height:7.8px;color:#bbbbbb;font-weight:700;letter-spacing:-0.586px;">TAG EXPLORER</span>
<div style="left:35px;top:978px;width:250px;height:0.8px;background:#464647;"></div>
<svg style="left:40.2px;top:981.1px;" width="6" height="8" viewBox="0 0 6 8"><path d="M1.6 0.9 L4.6 4 L1.6 7.1" fill="none" stroke="#c5c5c5" stroke-width="1"/></svg>
<span style="left:49.40px;top:982.00px;font-size:7.8px;line-height:7.8px;color:#bbbbbb;font-weight:700;letter-spacing:-0.314px;">ORPHANS</span>
<div style="left:35px;top:993.6px;width:250px;height:0.8px;background:#464647;"></div>
<svg style="left:40.2px;top:997.1px;" width="6" height="8" viewBox="0 0 6 8"><path d="M1.6 0.9 L4.6 4 L1.6 7.1" fill="none" stroke="#c5c5c5" stroke-width="1"/></svg>
<span style="left:49.40px;top:998.00px;font-size:7.8px;line-height:7.8px;color:#bbbbbb;font-weight:700;letter-spacing:-0.579px;">PLACEHOLDERS</span>
<div style="left:285px;top:21px;width:495px;height:24px;background:#252526;"></div>
<div style="left:285px;top:21px;width:32.6px;height:24px;background:#2d2d2d;"></div>
<span style="left:285.20px;top:30.00px;font-size:9px;line-height:9px;color:#73c991;">d</span>
<span style="left:292.80px;top:31.00px;font-size:8.1px;line-height:8.1px;color:#5f9b78;">U</span>
<div style="left:318.2px;top:21px;width:141.2px;height:24px;background:#1e1e1e;"></div>
<svg style="left:328.6px;top:28px;" width="8.4" height="9" viewBox="0 0 8.4 9"><path d="M2 0.2 L4.2 1.9 L6.4 0.2 V4.2 H8.4 L4.2 8.9 L0 4.2 H2 Z" fill="#4a9fd8"/></svg>
<span style="left:340.60px;top:29.00px;font-size:9.4px;line-height:9.4px;color:#d3a827;letter-spacing:-0.379px;">FtFI 2021 07 28.md</span>
<span style="left:420.00px;top:31.00px;font-size:8.1px;line-height:8.1px;color:#a48600;letter-spacing:-0.156px;">9+, U</span>
<div style="left:446.6px;top:29.8px;width:5.6px;height:5.6px;background:#ffffff;border-radius:50%;"></div>
<div style="left:460.2px;top:21px;width:82.5px;height:24px;background:#2d2d2d;"></div>
<svg style="left:472.6px;top:29.1px;" width="7" height="7.4" viewBox="0 0 7 7.4"><path d="M0 0.7 H7 M0 2.7 H5 M0 4.7 H7 M0 6.7 H4.2" stroke="#c5c5c5" stroke-width="1.15"/></svg>
<span style="left:482.60px;top:29.00px;font-size:9.4px;line-height:9.4px;color:#969696;letter-spacing:-0.073px;">Untitled-1</span>
<div style="left:543.5px;top:21px;width:82.5px;height:24px;background:#2d2d2d;"></div>
<svg style="left:555.8px;top:29.1px;" width="7" height="7.4" viewBox="0 0 7 7.4"><path d="M0 0.7 H7 M0 2.7 H5 M0 4.7 H7 M0 6.7 H4.2" stroke="#c5c5c5" stroke-width="1.15"/></svg>
<span style="left:565.80px;top:29.00px;font-size:9.4px;line-height:9.4px;color:#969696;letter-spacing:0.008px;">Untitled-2</span>
<div style="left:627px;top:21px;width:72px;height:24px;background:#2d2d2d;"></div>
<svg style="left:638.8px;top:29.1px;" width="7" height="7.4" viewBox="0 0 7 7.4"><path d="M0 0.7 H7 M0 2.7 H5 M0 4.7 H7 M0 6.7 H4.2" stroke="#c5c5c5" stroke-width="1.15"/></svg>
<span style="left:649.20px;top:29.00px;font-size:9.4px;line-height:9.4px;color:#969696;letter-spacing:-0.284px;">Settings</span>
<svg style="left:703.5px;top:27px;" width="11.5" height="11.5" viewBox="0 0 16 16"><circle cx="3" cy="3" r="1.7" fill="none" stroke="#dcdcdc" stroke-width="1.25"/><circle cx="13" cy="13" r="1.7" fill="none" stroke="#dcdcdc" stroke-width="1.25"/><path d="M3 4.8 V10.5 Q3 13 6 13 H8 M6.4 11 L8.4 13 L6.4 15 M13 11.2 V5.5 Q13 3 10 3 H8 M9.6 1 L7.6 3 L9.6 5" fill="none" stroke="#dcdcdc" stroke-width="1.25"/></svg>
<svg style="left:722.4px;top:27px;" width="11.5" height="11.5" viewBox="0 0 16 16"><path d="M1.5 2 H14.5 V7.5 M8 2 V14 M8 14 H1.5 V2" fill="none" stroke="#dcdcdc" stroke-width="1.25"/><circle cx="11.5" cy="11.5" r="2.6" fill="none" stroke="#dcdcdc" stroke-width="1.25"/><path d="M13.3 13.3 L15.3 15.3" stroke="#dcdcdc" stroke-width="1.25"/></svg>
<svg style="left:740.2px;top:27px;" width="11.5" height="11.5" viewBox="0 0 16 16"><path d="M1.5 2 H14.5 V14 H1.5 Z M8 2 V14" fill="none" stroke="#dcdcdc" stroke-width="1.25"/></svg>
<svg style="left:758.8px;top:30.6px;" width="10" height="4" viewBox="0 0 10 4"><circle cx="1.6" cy="2" r="0.95" fill="#dcdcdc"/><circle cx="5" cy="2" r="0.95" fill="#dcdcdc"/><circle cx="8.4" cy="2" r="0.95" fill="#dcdcdc"/></svg>
<svg style="left:300.5px;top:47.8px;" width="8.4" height="9" viewBox="0 0 8.4 9"><path d="M2 0.2 L4.2 1.9 L6.4 0.2 V4.2 H8.4 L4.2 8.9 L0 4.2 H2 Z" fill="#4a9fd8"/></svg>
<span style="left:312.00px;top:48.00px;font-size:9.4px;line-height:9.4px;color:#a9a9a9;letter-spacing:-0.402px;">FtFI 2021 07 28.md</span>
<svg style="left:390.15px;top:48.8px;" width="5.7" height="7.6" viewBox="0 0 6 8"><path d="M1.6 0.9 L4.6 4 L1.6 7.1" fill="none" stroke="#a0a0a0" stroke-width="1"/></svg>
<svg style="left:399px;top:48.3px;" width="9.6" height="8.4" viewBox="0 0 9.6 8.4"><rect x="0.6" y="0.6" width="8.4" height="6.6" rx="0.6" fill="none" stroke="#c5c5c5" stroke-width="1.25"/><path d="M2.3 5 H3.4 M4.2 5 V3 M5.6 5 V3.6 M6.2 5 H7.4" stroke="#c5c5c5" stroke-width="0.9"/></svg>
<span style="left:412.00px;top:48.00px;font-size:9.4px;line-height:9.4px;color:#a9a9a9;letter-spacing:-0.380px;"># Rafael Nepo</span>
<div style="left:285px;top:60px;width:495px;height:3px;background:linear-gradient(rgba(0,0,0,.55),rgba(0,0,0,0));"></div>
<div style="left:336px;top:360.006px;width:441px;height:0.8px;background:#2e2e2e;"></div>
<div style="left:336px;top:375.873px;width:441px;height:0.8px;background:#2e2e2e;"></div>
<div style="left:336px;top:60px;width:0.8px;height:350px;background:#3a3a3a;"></div>
<div style="left:336.4px;top:60px;width:213.9px;height:16.667px;background:#393939;"></div>
<div style="left:336.4px;top:110.001px;width:90.965px;height:16.667px;background:#393939;"></div>
<div style="left:336.4px;top:126.668px;width:213.9px;height:16.667px;background:#393939;"></div>
<div style="left:336.4px;top:193.336px;width:123.035px;height:16.667px;background:#393939;"></div>
<div style="left:336.4px;top:226.67px;width:37.515px;height:16.667px;background:#393939;"></div>
<div style="left:336.4px;top:260.004px;width:90.965px;height:16.667px;background:#393939;"></div>
<div style="left:336.4px;top:293.338px;width:90.965px;height:16.667px;background:#393939;"></div>
<div style="left:336.4px;top:310.005px;width:101.655px;height:16.667px;background:#393939;"></div>
<span style="left:301.80px;top:64.00px;font-family:'Liberation Mono', monospace;font-size:9.75px;line-height:9.75px;letter-spacing:-0.505px;color:#858585;">261</span>
<span style="left:335.90px;top:64.00px;font-family:'Liberation Mono', monospace;font-size:9.75px;line-height:9.75px;letter-spacing:-0.505px;color:#d4d4d4;">![](attachments/2021-07-28-19-32-02.png)</span>
<div style="left:357.28px;top:74.2px;width:187.075px;height:0.9px;background:#d4d4d4;"></div>
<span style="left:301.80px;top:81.00px;font-family:'Liberation Mono', monospace;font-size:9.75px;line-height:9.75px;letter-spacing:-0.505px;color:#858585;">262</span>
<span style="left:301.80px;top:97.00px;font-family:'Liberation Mono', monospace;font-size:9.75px;line-height:9.75px;letter-spacing:-0.505px;color:#858585;">263</span>
<span style="left:301.80px;top:114.00px;font-family:'Liberation Mono', monospace;font-size:9.75px;line-height:9.75px;letter-spacing:-0.505px;color:#858585;">264</span>
<span style="left:335.90px;top:114.00px;font-family:'Liberation Mono', monospace;font-size:9.75px;line-height:9.75px;letter-spacing:-0.505px;color:#d4d4d4;">Navigation Drawer</span>
<svg style="left:335.9px;top:125.201px;" width="53.45" height="2.2" viewBox="0 0 53.45 2.2"><path d="M0 1.6 L1.98 0.4 L3.96 1.6 L5.94 0.4 L7.92 1.6 L9.90 0.4 L11.88 1.6 L13.86 0.4 L15.84 1.6 L17.82 0.4 L19.80 1.6 L21.78 0.4 L23.76 1.6 L25.74 0.4 L27.71 1.6 L29.69 0.4 L31.67 1.6 L33.65 0.4 L35.63 1.6 L37.61 0.4 L39.59 1.6 L41.57 0.4 L43.55 1.6 L45.53 0.4 L47.51 1.6 L49.49 0.4 L51.47 1.6 L53.45 0.4" fill="none" stroke="#cca700" stroke-width="0.9"/></svg>
<svg style="left:394.695px;top:125.201px;" width="32.07" height="2.2" viewBox="0 0 32.07 2.2"><path d="M0 1.6 L2.00 0.4 L4.01 1.6 L6.01 0.4 L8.02 1.6 L10.02 0.4 L12.03 1.6 L14.03 0.4 L16.04 1.6 L18.04 0.4 L20.04 1.6 L22.05 0.4 L24.05 1.6 L26.06 0.4 L28.06 1.6 L30.07 0.4 L32.07 1.6" fill="none" stroke="#cca700" stroke-width="0.9"/></svg>
<span style="left:301.80px;top:131.00px;font-family:'Liberation Mono', monospace;font-size:9.75px;line-height:9.75px;letter-spacing:-0.505px;color:#858585;">265</span>
<span style="left:335.90px;top:131.00px;font-family:'Liberation Mono', monospace;font-size:9.75px;line-height:9.75px;letter-spacing:-0.505px;color:#d4d4d4;">![](attachments/2021-07-28-19-33-38.png)</span>
<div style="left:357.28px;top:140.868px;width:187.075px;height:0.9px;background:#d4d4d4;"></div>
<span style="left:301.80px;top:147.00px;font-family:'Liberation Mono', monospace;font-size:9.75px;line-height:9.75px;letter-spacing:-0.505px;color:#858585;">266</span>
<span style="left:301.80px;top:164.00px;font-family:'Liberation Mono', monospace;font-size:9.75px;line-height:9.75px;letter-spacing:-0.505px;color:#858585;">267</span>
<span style="left:301.80px;top:181.00px;font-family:'Liberation Mono', monospace;font-size:9.75px;line-height:9.75px;letter-spacing:-0.505px;color:#858585;">268</span>
<span style="left:301.80px;top:197.00px;font-family:'Liberation Mono', monospace;font-size:9.75px;line-height:9.75px;letter-spacing:-0.505px;color:#858585;">269</span>
<span style="left:335.90px;top:197.00px;font-family:'Liberation Mono', monospace;font-size:9.75px;line-height:9.75px;letter-spacing:-0.505px;color:#d4d4d4;">filter sort and naviage</span>
<svg style="left:421.42px;top:208.536px;" width="37.415" height="2.2" viewBox="0 0 37.415 2.2"><path d="M0 1.6 L1.97 0.4 L3.94 1.6 L5.91 0.4 L7.88 1.6 L9.85 0.4 L11.82 1.6 L13.78 0.4 L15.75 1.6 L17.72 0.4 L19.69 1.6 L21.66 0.4 L23.63 1.6 L25.60 0.4 L27.57 1.6 L29.54 0.4 L31.51 1.6 L33.48 0.4 L35.45 1.6 L37.41 0.4" fill="none" stroke="#cca700" stroke-width="0.9"/></svg>
<span style="left:301.80px;top:214.00px;font-family:'Liberation Mono', monospace;font-size:9.75px;line-height:9.75px;letter-spacing:-0.505px;color:#858585;">270</span>
<span style="left:301.80px;top:231.00px;font-family:'Liberation Mono', monospace;font-size:9.75px;line-height:9.75px;letter-spacing:-0.505px;color:#858585;">271</span>
<span style="left:335.90px;top:231.00px;font-family:'Liberation Mono', monospace;font-size:9.75px;line-height:9.75px;letter-spacing:-0.505px;color:#d4d4d4;">by type</span>
<svg style="left:335.9px;top:241.87px;" width="10.69" height="2.2" viewBox="0 0 10.69 2.2"><path d="M0 1.6 L2.14 0.4 L4.28 1.6 L6.41 0.4 L8.55 1.6 L10.69 0.4" fill="none" stroke="#cca700" stroke-width="0.9"/></svg>
<svg style="left:351.935px;top:241.87px;" width="21.38" height="2.2" viewBox="0 0 21.38 2.2"><path d="M0 1.6 L1.94 0.4 L3.89 1.6 L5.83 0.4 L7.77 1.6 L9.72 0.4 L11.66 1.6 L13.61 0.4 L15.55 1.6 L17.49 0.4 L19.44 1.6 L21.38 0.4" fill="none" stroke="#cca700" stroke-width="0.9"/></svg>
<span style="left:301.80px;top:247.00px;font-family:'Liberation Mono', monospace;font-size:9.75px;line-height:9.75px;letter-spacing:-0.505px;color:#858585;">272</span>
<span style="left:301.80px;top:264.00px;font-family:'Liberation Mono', monospace;font-size:9.75px;line-height:9.75px;letter-spacing:-0.505px;color:#858585;">273</span>
<span style="left:335.90px;top:264.00px;font-family:'Liberation Mono', monospace;font-size:9.75px;line-height:9.75px;letter-spacing:-0.505px;color:#d4d4d4;">oldest to newsest</span>
<svg style="left:335.9px;top:275.204px;" width="32.07" height="2.2" viewBox="0 0 32.07 2.2"><path d="M0 1.6 L2.00 0.4 L4.01 1.6 L6.01 0.4 L8.02 1.6 L10.02 0.4 L12.03 1.6 L14.03 0.4 L16.04 1.6 L18.04 0.4 L20.04 1.6 L22.05 0.4 L24.05 1.6 L26.06 0.4 L28.06 1.6 L30.07 0.4 L32.07 1.6" fill="none" stroke="#cca700" stroke-width="0.9"/></svg>
<svg style="left:373.315px;top:275.204px;" width="10.69" height="2.2" viewBox="0 0 10.69 2.2"><path d="M0 1.6 L2.14 0.4 L4.28 1.6 L6.41 0.4 L8.55 1.6 L10.69 0.4" fill="none" stroke="#cca700" stroke-width="0.9"/></svg>
<svg style="left:389.35px;top:275.204px;" width="37.415" height="2.2" viewBox="0 0 37.415 2.2"><path d="M0 1.6 L1.97 0.4 L3.94 1.6 L5.91 0.4 L7.88 1.6 L9.85 0.4 L11.82 1.6 L13.78 0.4 L15.75 1.6 L17.72 0.4 L19.69 1.6 L21.66 0.4 L23.63 1.6 L25.60 0.4 L27.57 1.6 L29.54 0.4 L31.51 1.6 L33.48 0.4 L35.45 1.6 L37.41 0.4" fill="none" stroke="#cca700" stroke-width="0.9"/></svg>
<span style="left:301.80px;top:281.00px;font-family:'Liberation Mono', monospace;font-size:9.75px;line-height:9.75px;letter-spacing:-0.505px;color:#858585;">274</span>
<span style="left:301.80px;top:297.00px;font-family:'Liberation Mono', monospace;font-size:9.75px;line-height:9.75px;letter-spacing:-0.505px;color:#858585;">275</span>
<span style="left:335.90px;top:297.00px;font-family:'Liberation Mono', monospace;font-size:9.75px;line-height:9.75px;letter-spacing:-0.505px;color:#d4d4d4;">back of the cards</span>
<svg style="left:378.66px;top:308.538px;" width="16.035" height="2.2" viewBox="0 0 16.035 2.2"><path d="M0 1.6 L2.00 0.4 L4.01 1.6 L6.01 0.4 L8.02 1.6 L10.02 0.4 L12.03 1.6 L14.03 0.4 L16.04 1.6" fill="none" stroke="#cca700" stroke-width="0.9"/></svg>
<svg style="left:400.04px;top:308.538px;" width="26.725" height="2.2" viewBox="0 0 26.725 2.2"><path d="M0 1.6 L2.06 0.4 L4.11 1.6 L6.17 0.4 L8.22 1.6 L10.28 0.4 L12.33 1.6 L14.39 0.4 L16.45 1.6 L18.50 0.4 L20.56 1.6 L22.61 0.4 L24.67 1.6 L26.72 0.4" fill="none" stroke="#cca700" stroke-width="0.9"/></svg>
<span style="left:301.80px;top:314.00px;font-family:'Liberation Mono', monospace;font-size:9.75px;line-height:9.75px;letter-spacing:-0.505px;color:#858585;">276</span>
<span style="left:335.90px;top:314.00px;font-family:'Liberation Mono', monospace;font-size:9.75px;line-height:9.75px;letter-spacing:-0.505px;color:#d4d4d4;">textyou can find it</span>
<svg style="left:335.9px;top:325.205px;" width="37.415" height="2.2" viewBox="0 0 37.415 2.2"><path d="M0 1.6 L1.97 0.4 L3.94 1.6 L5.91 0.4 L7.88 1.6 L9.85 0.4 L11.82 1.6 L13.78 0.4 L15.75 1.6 L17.72 0.4 L19.69 1.6 L21.66 0.4 L23.63 1.6 L25.60 0.4 L27.57 1.6 L29.54 0.4 L31.51 1.6 L33.48 0.4 L35.45 1.6 L37.41 0.4" fill="none" stroke="#cca700" stroke-width="0.9"/></svg>
<svg style="left:378.66px;top:325.205px;" width="16.035" height="2.2" viewBox="0 0 16.035 2.2"><path d="M0 1.6 L2.00 0.4 L4.01 1.6 L6.01 0.4 L8.02 1.6 L10.02 0.4 L12.03 1.6 L14.03 0.4 L16.04 1.6" fill="none" stroke="#cca700" stroke-width="0.9"/></svg>
<svg style="left:400.04px;top:325.205px;" width="21.38" height="2.2" viewBox="0 0 21.38 2.2"><path d="M0 1.6 L1.94 0.4 L3.89 1.6 L5.83 0.4 L7.77 1.6 L9.72 0.4 L11.66 1.6 L13.61 0.4 L15.55 1.6 L17.49 0.4 L19.44 1.6 L21.38 0.4" fill="none" stroke="#cca700" stroke-width="0.9"/></svg>
<svg style="left:426.765px;top:325.205px;" width="10.69" height="2.2" viewBox="0 0 10.69 2.2"><path d="M0 1.6 L2.14 0.4 L4.28 1.6 L6.41 0.4 L8.55 1.6 L10.69 0.4" fill="none" stroke="#cca700" stroke-width="0.9"/></svg>
<span style="left:301.80px;top:331.00px;font-family:'Liberation Mono', monospace;font-size:9.75px;line-height:9.75px;letter-spacing:-0.505px;color:#858585;">277</span>
<span style="left:301.80px;top:347.00px;font-family:'Liberation Mono', monospace;font-size:9.75px;line-height:9.75px;letter-spacing:-0.505px;color:#858585;">278</span>
<span style="left:301.80px;top:364.00px;font-family:'Liberation Mono', monospace;font-size:9.75px;line-height:9.75px;letter-spacing:-0.505px;color:#c6c6c6;">279</span>
<span style="left:301.80px;top:381.00px;font-family:'Liberation Mono', monospace;font-size:9.75px;line-height:9.75px;letter-spacing:-0.505px;color:#858585;">280</span>
<span style="left:301.80px;top:397.00px;font-family:'Liberation Mono', monospace;font-size:9.75px;line-height:9.75px;letter-spacing:-0.505px;color:#858585;">281</span>
<span style="left:335.90px;top:397.00px;font-family:'Liberation Mono', monospace;font-size:9.75px;line-height:9.75px;letter-spacing:-0.505px;color:#d4d4d4;">*</span>
<div style="left:341.645px;top:394.34px;width:1px;height:15.5px;background:#aeafad;"></div>
<div style="left:769.8px;top:625.8px;width:10.2px;height:90px;background:#424242;"></div>
<div style="left:769.8px;top:664.6px;width:10.2px;height:0.9px;background:#8a8a8a;"></div>
<div style="left:777.4px;top:71px;width:2.6px;height:4.2px;background:#cca700;"></div>
<div style="left:777.4px;top:78px;width:2.6px;height:16.5px;background:#cca700;"></div>
<div style="left:777.4px;top:99px;width:2.6px;height:4.3px;background:#cca700;"></div>
<div style="left:777.4px;top:105px;width:2.6px;height:38px;background:#cca700;"></div>
<div style="left:777.4px;top:144.8px;width:2.6px;height:22.8px;background:#cca700;"></div>
<div style="left:777.4px;top:178.9px;width:2.6px;height:8.1px;background:#cca700;"></div>
<div style="left:777.4px;top:192.2px;width:2.6px;height:3.6px;background:#cca700;"></div>
<div style="left:777.4px;top:202.8px;width:2.6px;height:8.4px;background:#cca700;"></div>
<div style="left:777.4px;top:218.3px;width:2.6px;height:4.5px;background:#cca700;"></div>
<div style="left:777.4px;top:225.3px;width:2.6px;height:3.5px;background:#cca700;"></div>
<div style="left:777.4px;top:231.6px;width:2.6px;height:4.2px;background:#cca700;"></div>
<div style="left:777.4px;top:259px;width:2.6px;height:3.6px;background:#cca700;"></div>
<div style="left:777.4px;top:265px;width:2.6px;height:9.9px;background:#cca700;"></div>
<div style="left:777.4px;top:280.2px;width:2.6px;height:3.5px;background:#cca700;"></div>
<div style="left:777.4px;top:287.2px;width:2.6px;height:14.1px;background:#cca700;"></div>
<div style="left:777.4px;top:314.3px;width:2.6px;height:4.2px;background:#cca700;"></div>
<div style="left:777.4px;top:321.3px;width:2.6px;height:5.3px;background:#cca700;"></div>
<div style="left:777.4px;top:331.1px;width:2.6px;height:5.3px;background:#cca700;"></div>
<div style="left:777.4px;top:371.2px;width:2.6px;height:9.8px;background:#cca700;"></div>
<div style="left:777.4px;top:392.2px;width:2.6px;height:4.5px;background:#cca700;"></div>
<div style="left:777.4px;top:398.6px;width:2.6px;height:3.7px;background:#cca700;"></div>
<div style="left:777.4px;top:419px;width:2.6px;height:4.4px;background:#cca700;"></div>
<div style="left:777.4px;top:432px;width:2.6px;height:3.7px;background:#cca700;"></div>
<div style="left:777.4px;top:439.4px;width:2.6px;height:29.6px;background:#cca700;"></div>
<div style="left:777.4px;top:475.7px;width:2.6px;height:5.6px;background:#cca700;"></div>
<div style="left:777.4px;top:492.4px;width:2.6px;height:4.5px;background:#cca700;"></div>
<div style="left:777.4px;top:508px;width:2.6px;height:4.5px;background:#cca700;"></div>
<div style="left:777.4px;top:528.4px;width:2.6px;height:4.5px;background:#cca700;"></div>
<div style="left:777.4px;top:535.8px;width:2.6px;height:3.8px;background:#cca700;"></div>
<div style="left:777.4px;top:542.2px;width:2.6px;height:4px;background:#cca700;"></div>
<div style="left:777.4px;top:552.5px;width:2.6px;height:7.5px;background:#cca700;"></div>
<div style="left:777.4px;top:566.6px;width:2.6px;height:4.4px;background:#cca700;"></div>
<div style="left:777.4px;top:583.3px;width:2.6px;height:3.7px;background:#cca700;"></div>
<div style="left:777.4px;top:591.5px;width:2.6px;height:5.5px;background:#cca700;"></div>
<div style="left:777.4px;top:601.5px;width:2.6px;height:12.3px;background:#cca700;"></div>
<div style="left:777.4px;top:615.6px;width:2.6px;height:9.4px;background:#cca700;"></div>
<div style="left:777.4px;top:631.6px;width:2.6px;height:3.7px;background:#8f7a1c;"></div>
<div style="left:777.4px;top:641.6px;width:2.6px;height:18.4px;background:#8f7a1c;"></div>
<div style="left:780px;top:21px;width:1px;height:739px;background:#444444;"></div>
<div style="left:781px;top:21px;width:499px;height:24px;background:#252526;"></div>
<div style="left:781px;top:21px;width:149px;height:24px;background:#1e1e1e;"></div>
<svg style="left:787.6px;top:28px;" width="10.4" height="9" viewBox="0 0 10.4 9"><rect x="0.6" y="0.6" width="9.2" height="7.6" rx="1" fill="#3a3a3a" stroke="#cfcfcf" stroke-width="1.1"/><rect x="1.4" y="1.4" width="3" height="1.7" fill="#bdbdbd"/><path d="M6 3.4 V1.6 M7.8 3.4 V2.2" stroke="#bdbdbd" stroke-width="0.9"/><rect x="1.2" y="4" width="8" height="3.6" fill="#2a2a2a"/></svg>
<span style="left:802.00px;top:29.00px;font-size:9.4px;line-height:9.4px;color:#c4c4c4;letter-spacing:-0.345px;">Preview FtFI 2021 07 28.md</span>
<svg style="left:916.8px;top:29.3px;" width="6.4" height="6.4" viewBox="0 0 6.4 6.4"><path d="M0.4 0.4 L6 6 M6 0.4 L0.4 6" stroke="#c5c5c5" stroke-width="1"/></svg>
<svg style="left:1258.6px;top:30.6px;" width="10" height="4" viewBox="0 0 10 4"><circle cx="1.6" cy="2" r="0.95" fill="#dcdcdc"/><circle cx="5" cy="2" r="0.95" fill="#dcdcdc"/><circle cx="8.4" cy="2" r="0.95" fill="#dcdcdc"/></svg>
<div style="left:1272.4px;top:690px;width:7.6px;height:38.4px;background:#4b4b4b;"></div>
<div class="clip" style="left:781px;top:45px;width:499px;height:714.6px;"><div style="left:-781px;top:-45px;">
<div style="left:816.2px;top:30px;width:421.6px;height:199.5px;background:#1a1a1a;"></div>
<div style="left:816.2px;top:30px;width:4.8px;height:177.6px;background:#050505;"></div>
<div style="left:1146.2px;top:30px;width:3px;height:177.6px;background:#050505;"></div>
<div style="left:821px;top:30px;width:325.2px;height:164.4px;background:#f9f9f9;"></div>
<div style="left:1114.8px;top:170.5px;width:31.4px;height:23.9px;background:#fdd633;"></div>
<div style="left:1114px;top:44px;width:5px;height:1.6px;background:#2b2b2b;"></div>
<div style="left:1121px;top:44px;width:3.6px;height:1.6px;background:#2b2b2b;border-radius:0 0 2px 2px;"></div>
<div style="left:1126px;top:44px;width:3.6px;height:1.6px;background:#2b2b2b;border-radius:0 0 2px 2px;"></div>
<div style="left:835.5px;top:54.8px;width:39.8px;height:39.8px;background:#fdd633;border-radius:50%;"></div>
<svg style="left:840px;top:44px;" width="58" height="44" viewBox="0 0 58 44"><defs><linearGradient id="bL" x1="0" x2="1"><stop offset="0" stop-color="#17140c"/><stop offset=".18" stop-color="#7d6610"/><stop offset=".42" stop-color="#c9a416"/><stop offset=".62" stop-color="#4a3c0e"/><stop offset=".8" stop-color="#6b570f"/><stop offset="1" stop-color="#15120c"/></linearGradient>
<linearGradient id="bR" x1="0" x2="1"><stop offset="0" stop-color="#1d1d1d"/><stop offset=".2" stop-color="#9a9a9a"/><stop offset=".42" stop-color="#fbfbfb"/><stop offset=".62" stop-color="#8a8a8a"/><stop offset=".82" stop-color="#2c2c2c"/><stop offset="1" stop-color="#141414"/></linearGradient>
<filter id="bb"><feGaussianBlur stdDeviation="0.4"/></filter></defs>
<g filter="url(#bb)">
<path d="M9.4 10.4 H22.9 C23 17 25 21.6 26.2 26 V39 H3.6 V26 C5.6 21.6 9 17 9.4 10.4 Z" fill="url(#bL)"/>
<path d="M36.4 10.4 H50.6 C51 17 53.6 21.6 55.4 26 V39 H33.4 V26 C35 21.6 36 17 36.4 10.4 Z" fill="url(#bR)"/>
<path d="M11.6 0.6 H19.8 V4.6 H22.4 V10.6 H8.4 V4.6 H11.6 Z" fill="#111"/>
<path d="M38.6 0.6 H48 V3.6 H51.2 V10.6 H36 V3.6 H38.6 Z" fill="#262626"/>
<rect x="39" y="5" width="9" height="4.6" fill="#5a5a5a"/>
<path d="M22 6 H36.4 V9 L33 12 L35 17 L32.4 24 L30.6 28.6 L28 24 L25 17 L26.6 12 L22 9 Z" fill="#0f0f0f"/>
<rect x="3.2" y="25.6" width="23.4" height="2.6" fill="#0f0d08"/><rect x="33" y="25.6" width="22.8" height="2.6" fill="#1c1c1c"/>
<rect x="3.6" y="37.4" width="22.8" height="2.6" fill="#0f0d08"/><rect x="33.4" y="37.4" width="22" height="2.6" fill="#1a1a1a"/>
<rect x="15.6" y="28" width="4.6" height="9.6" fill="#0f0d08" opacity=".8"/><rect x="47" y="28" width="5.6" height="9.6" fill="#1a1a1a" opacity=".75"/>
<path d="M14 13 H23 M14.4 15.6 H23.4 M15 18.2 H24 M16 20.8 H24.6" stroke="#231c06" stroke-width="0.9"/>
</g></svg>
<span style="left:906.60px;top:57.00px;font-size:27.4px;line-height:27.4px;color:#2b2b2b;font-weight:700;letter-spacing:-0.263px;">Search</span>
<div style="left:1000.2px;top:57.6px;width:1.9px;height:27px;background:#fbc92e;"></div>
<span style="left:907.40px;top:91.00px;font-size:8.3px;line-height:8.3px;color:#424242;letter-spacing:-0.155px;text-shadow:0 0 0.25px;">Text</span>
<span style="left:907.40px;top:101.00px;font-size:8.3px;line-height:8.3px;color:#424242;letter-spacing:-0.092px;text-shadow:0 0 0.25px;">Image</span>
<span style="left:907.40px;top:112.00px;font-size:8.3px;line-height:8.3px;color:#424242;text-shadow:0 0 0.25px;">Video</span>
<span style="left:907.40px;top:122.00px;font-size:8.3px;line-height:8.3px;color:#424242;text-shadow:0 0 0.25px;">Music</span>
<span style="left:907.40px;top:133.00px;font-size:8.3px;line-height:8.3px;color:#424242;text-shadow:0 0 0.25px;">Files</span>
<span style="left:907.40px;top:143.00px;font-size:8.3px;line-height:8.3px;color:#424242;letter-spacing:-0.009px;text-shadow:0 0 0.25px;">Article</span>
<span style="left:907.40px;top:154.00px;font-size:8.3px;line-height:8.3px;color:#424242;text-shadow:0 0 0.25px;">News</span>
<span style="left:907.40px;top:164.00px;font-size:8.3px;line-height:8.3px;color:#424242;letter-spacing:-0.372px;text-shadow:0 0 0.25px;">Books</span>
<span style="left:943.20px;top:91.00px;font-size:8.3px;line-height:8.3px;color:#424242;letter-spacing:-0.123px;text-shadow:0 0 0.25px;">Websites</span>
<span style="left:943.20px;top:101.00px;font-size:8.3px;line-height:8.3px;color:#424242;text-shadow:0 0 0.25px;">Apps</span>
<span style="left:943.20px;top:112.00px;font-size:8.3px;line-height:8.3px;color:#424242;text-shadow:0 0 0.25px;">Games</span>
<span style="left:943.20px;top:122.00px;font-size:8.3px;line-height:8.3px;color:#424242;text-shadow:0 0 0.25px;">Movies</span>
<span style="left:943.20px;top:133.00px;font-size:8.3px;line-height:8.3px;color:#424242;text-shadow:0 0 0.25px;">Courses</span>
<span style="left:943.20px;top:143.00px;font-size:8.3px;line-height:8.3px;color:#424242;letter-spacing:-0.151px;text-shadow:0 0 0.25px;">Workshops</span>
<span style="left:943.20px;top:154.00px;font-size:8.3px;line-height:8.3px;color:#424242;text-shadow:0 0 0.25px;">Schools</span>
<span style="left:943.20px;top:164.00px;font-size:8.3px;line-height:8.3px;color:#424242;letter-spacing:-0.062px;text-shadow:0 0 0.25px;">Colleges</span>
<span style="left:995.00px;top:91.00px;font-size:8.3px;line-height:8.3px;color:#424242;letter-spacing:-0.141px;text-shadow:0 0 0.25px;">People</span>
<span style="left:995.00px;top:101.00px;font-size:8.3px;line-height:8.3px;color:#424242;text-shadow:0 0 0.25px;">Maps</span>
<span style="left:995.00px;top:112.00px;font-size:8.3px;line-height:8.3px;color:#424242;letter-spacing:0.116px;text-shadow:0 0 0.25px;">Calendar</span>
<span style="left:995.00px;top:122.00px;font-size:8.3px;line-height:8.3px;color:#424242;letter-spacing:-0.026px;text-shadow:0 0 0.25px;">Social Media</span>
<span style="left:995.00px;top:133.00px;font-size:8.3px;line-height:8.3px;color:#424242;text-shadow:0 0 0.25px;">Companies</span>
<span style="left:995.00px;top:143.00px;font-size:8.3px;line-height:8.3px;color:#424242;text-shadow:0 0 0.25px;">Keynotes</span>
<span style="left:995.00px;top:154.00px;font-size:8.3px;line-height:8.3px;color:#424242;text-shadow:0 0 0.25px;">Stores</span>
<span style="left:995.00px;top:164.00px;font-size:8.3px;line-height:8.3px;color:#2b2b2b;font-weight:700;letter-spacing:-0.097px;">+ More</span>
<svg style="left:1050px;top:95px;" width="98" height="100" viewBox="0 0 98 100"><defs><filter id="hb"><feGaussianBlur stdDeviation="0.55"/></filter>
<linearGradient id="hg" x1="0" y1="0" x2="1" y2="1"><stop offset="0" stop-color="#6a3e2e"/><stop offset=".45" stop-color="#4d2b20"/><stop offset="1" stop-color="#2e1912"/></linearGradient></defs>
<g filter="url(#hb)">
<path d="M45 44 L45.6 24 C46.5 20 49 18.4 51.2 19.8 C53 24 54 29 55 33 C58 39 61 43 62 48 C64 56 64 66 64.4 74 C68 83 74 92 79.6 99.6 L51 99.6 C47 94 44 90 41.6 87.4 C37 82 32 77 28.7 71 L45 71 Z" fill="url(#hg)"/>
<rect x="4.4" y="25" width="14" height="7.4" rx="3.6" fill="#50291e"/>
<rect x="5.6" y="34.2" width="13" height="9" rx="4.2" fill="#45241a"/>
<rect x="5" y="45.2" width="13" height="9.4" rx="4.4" fill="#41221a"/>
<rect x="7" y="57.6" width="11" height="7.2" rx="3.5" fill="#3a1e17"/>
<ellipse cx="52.4" cy="23.6" rx="1.5" ry="2.6" fill="#a47c70"/>
<ellipse cx="8.4" cy="38.4" rx="1.5" ry="2.2" fill="#7d5548"/><ellipse cx="8" cy="49.6" rx="1.5" ry="2.4" fill="#7d5548"/><ellipse cx="9.6" cy="61" rx="1.3" ry="1.9" fill="#6d483d"/>
</g>
<rect x="13" y="2.2" width="33.2" height="69.8" rx="4.6" fill="#111"/>
<rect x="14.8" y="4" width="29.6" height="66.2" rx="3.2" fill="#fdfdfd"/>
<rect x="22" y="3.6" width="15" height="2.8" rx="1.4" fill="#111"/>
<g fill="#b4b4b4"><rect x="20" y="9" width="19" height="1"/><rect x="23" y="11.2" width="13" height="1"/><rect x="18" y="15" width="23" height=".7"/><rect x="18" y="17" width="23" height=".7"/><rect x="18" y="19" width="23" height=".7"/><rect x="21" y="21" width="17" height=".7"/>
<rect x="18" y="47" width="23" height=".7"/><rect x="18" y="49" width="23" height=".7"/><rect x="18" y="51" width="23" height=".7"/><rect x="18" y="53" width="23" height=".7"/><rect x="18" y="55" width="23" height=".7"/><rect x="18" y="57" width="23" height=".7"/><rect x="18" y="59" width="23" height=".7"/><rect x="18" y="61" width="23" height=".7"/><rect x="18" y="63" width="23" height=".7"/><rect x="18" y="65" width="20" height=".7"/></g>
<circle cx="22.6" cy="30.4" r="4" fill="#f6c62e"/><rect x="24" y="28" width="13" height="6.4" rx="1" fill="#d7dbe6"/><path d="M18 42 L24 36 L30 42 Z" fill="#f3d46a"/><rect x="28" y="37" width="11" height="4" fill="#c8cfe0"/><circle cx="36" cy="27.6" r="1.6" fill="#e6d9a0"/>
</svg>
<div style="left:821px;top:194.4px;width:325.2px;height:13.2px;background:#a4a3a9;"></div>
<div style="left:823.6px;top:195.9px;width:10.1px;height:1.1px;background:#f2f2f4;"></div>
<div style="left:834.63px;top:195.9px;width:10.1px;height:1.1px;background:#f2f2f4;"></div>
<div style="left:845.66px;top:195.9px;width:10.1px;height:1.1px;background:#f2f2f4;"></div>
<div style="left:856.69px;top:195.9px;width:10.1px;height:1.1px;background:#f2f2f4;"></div>
<div style="left:867.72px;top:195.9px;width:10.1px;height:1.1px;background:#f2f2f4;"></div>
<div style="left:878.75px;top:195.9px;width:10.1px;height:1.1px;background:#f2f2f4;"></div>
<div style="left:889.78px;top:195.9px;width:10.1px;height:1.1px;background:#f2f2f4;"></div>
<div style="left:900.81px;top:195.9px;width:10.1px;height:1.1px;background:#f2f2f4;"></div>
<div style="left:911.84px;top:195.9px;width:10.1px;height:1.1px;background:#f2f2f4;"></div>
<div style="left:922.87px;top:195.9px;width:10.1px;height:1.1px;background:#f2f2f4;"></div>
<div style="left:933.9px;top:195.9px;width:10.1px;height:1.1px;background:#f2f2f4;"></div>
<div style="left:944.93px;top:195.6px;width:10.1px;height:1.8px;background:#ffffff;"></div>
<div style="left:955.96px;top:196.1px;width:10.1px;height:0.8px;background:#c6c5cb;"></div>
<div style="left:966.99px;top:196.1px;width:10.1px;height:0.8px;background:#c6c5cb;"></div>
<div style="left:978.02px;top:196.1px;width:10.1px;height:0.8px;background:#c6c5cb;"></div>
<div style="left:989.05px;top:196.1px;width:10.1px;height:0.8px;background:#c6c5cb;"></div>
<div style="left:1000.08px;top:196.1px;width:10.1px;height:0.8px;background:#c6c5cb;"></div>
<div style="left:1011.11px;top:196.1px;width:10.1px;height:0.8px;background:#c6c5cb;"></div>
<div style="left:1022.14px;top:196.1px;width:10.1px;height:0.8px;background:#c6c5cb;"></div>
<div style="left:1033.17px;top:196.1px;width:10.1px;height:0.8px;background:#c6c5cb;"></div>
<div style="left:1044.2px;top:196.1px;width:10.1px;height:0.8px;background:#c6c5cb;"></div>
<div style="left:1055.23px;top:196.1px;width:10.1px;height:0.8px;background:#c6c5cb;"></div>
<div style="left:1066.26px;top:196.1px;width:10.1px;height:0.8px;background:#c6c5cb;"></div>
<div style="left:1077.29px;top:196.1px;width:10.1px;height:0.8px;background:#c6c5cb;"></div>
<div style="left:1088.32px;top:196.1px;width:10.1px;height:0.8px;background:#c6c5cb;"></div>
<div style="left:1099.35px;top:196.1px;width:10.1px;height:0.8px;background:#c6c5cb;"></div>
<div style="left:1110.38px;top:196.1px;width:10.1px;height:0.8px;background:#c6c5cb;"></div>
<div style="left:1121.41px;top:196.1px;width:10.1px;height:0.8px;background:#c6c5cb;"></div>
<div style="left:1132.44px;top:196.1px;width:10.1px;height:0.8px;background:#c6c5cb;"></div>
<span style="left:827.60px;top:200.01px;font-size:4px;line-height:4px;color:#d6d6da;">&lt;</span>
<span style="left:835.00px;top:199.95px;font-size:3.95678px;line-height:3.95678px;color:#dedee2;">11/29</span>
<span style="left:849.60px;top:200.01px;font-size:4px;line-height:4px;color:#d6d6da;">&gt;</span>
<div style="left:1123px;top:200.4px;width:2.6px;height:2.8px;background:#8d8c93;border-radius:40%;"></div>
<div style="left:1130.6px;top:200.4px;width:2.6px;height:2.8px;background:#8d8c93;border-radius:40%;"></div>
<div style="left:1138px;top:200.4px;width:2.6px;height:2.8px;background:#8d8c93;border-radius:40%;"></div>
<svg style="left:1093px;top:194.4px;" width="53.2" height="13.2" viewBox="0 0 53.2 13.2"><defs><filter id="hb2"><feGaussianBlur stdDeviation="0.6"/></filter><linearGradient id="hw" x1="0" x2="1"><stop offset="0" stop-color="#4d3a36"/><stop offset=".55" stop-color="#5a4740"/><stop offset=".8" stop-color="#9a8a4a"/><stop offset="1" stop-color="#b9a23c"/></linearGradient></defs><path d="M6 0 H53.2 V13.2 H14 Z" fill="url(#hw)" opacity="0.8" filter="url(#hb2)"/></svg>
<div style="left:826.8px;top:217px;width:2.2px;height:5px;background:#777;border-radius:1.1px;"></div>
<svg style="left:824.4px;top:216.2px;" width="7" height="7" viewBox="0 0 7 7"><path d="M6.4 0.4 L0.6 6.6" stroke="#b43a3a" stroke-width="0.8"/></svg>
<span style="left:822.40px;top:225.44px;font-size:3.14371px;line-height:3.14371px;color:#868686;">Unmute</span>
<div style="left:849.2px;top:218px;width:4.6px;height:4px;background:#9a9a9a;border-radius:0.8px;"></div>
<svg style="left:853.8px;top:218px;" width="2.4" height="4" viewBox="0 0 2.4 4"><path d="M0 2 L2.4 0.2 V3.8 Z" fill="#9a9a9a"/></svg>
<svg style="left:848.9px;top:216.2px;" width="7" height="7" viewBox="0 0 7 7"><path d="M6.4 0.4 L0.6 6.6" stroke="#b43a3a" stroke-width="0.8"/></svg>
<span style="left:844.90px;top:225.52px;font-size:3.04323px;line-height:3.04323px;color:#868686;">Start Video</span>
<span style="left:836.50px;top:219.81px;font-size:4px;line-height:4px;color:#5a5a5a;">^</span>
<span style="left:862.00px;top:219.81px;font-size:4px;line-height:4px;color:#5a5a5a;">^</span>
<div style="left:990.6px;top:217.6px;width:2.6px;height:2.6px;background:#a6a6a6;border-radius:50%;"></div>
<div style="left:993.8px;top:217.6px;width:2.6px;height:2.6px;background:#a6a6a6;border-radius:50%;"></div>
<div style="left:989.8px;top:220.4px;width:7.8px;height:2.2px;background:#a6a6a6;border-radius:1.2px 1.2px 0 0;"></div>
<span style="left:985.70px;top:225.34px;font-size:3.25512px;line-height:3.25512px;color:#868686;">Participants</span>
<span style="left:998.80px;top:217.49px;font-size:3.2px;line-height:3.2px;color:#7a7a7a;">27</span>
<div style="left:1018.4px;top:217.6px;width:6px;height:4.2px;background:#a6a6a6;border-radius:1.6px;"></div>
<span style="left:1017.90px;top:225.29px;font-size:3.3148px;line-height:3.3148px;color:#868686;">Chat</span>
<div style="left:1041.5px;top:218px;width:6.6px;height:4.8px;background:#22c55a;border-radius:1.1px;"></div>
<span style="left:1035.50px;top:225.52px;font-size:3.04285px;line-height:3.04285px;color:#1fae4c;">Share Screen</span>
<div style="left:1065.9px;top:217.4px;width:5.2px;height:5.2px;background:#a6a6a6;border-radius:50%;"></div>
<span style="left:1063.50px;top:225.47px;font-size:3.10132px;line-height:3.10132px;color:#868686;">Record</span>
<div style="left:1087px;top:217.4px;width:5.2px;height:5.2px;background:#a6a6a6;border-radius:50%;"></div>
<span style="left:1082.80px;top:225.51px;font-size:3.05891px;line-height:3.05891px;color:#868686;">Reactions</span>
<div style="left:1218.8px;top:219.2px;width:16px;height:7.1px;background:#c3222c;border-radius:1.8px;"></div>
<span style="left:1222.60px;top:221.59px;font-size:2.96727px;line-height:2.96727px;color:#f0c8c8;font-weight:700;">Leave</span>
<svg style="left:1152.8px;top:90.2px;" width="84" height="47.6" viewBox="0 0 84 47.6"><defs><filter id="bl90" x="-5%" y="-5%" width="110%" height="110%"><feGaussianBlur stdDeviation="0.7"/></filter>
<clipPath id="cp90"><rect x="0" y="0" width="84" height="47.6"/></clipPath>
<linearGradient id="jk90" x1="0" x2="1"><stop offset="0" stop-color="#d99a16"/><stop offset=".5" stop-color="#f2b21e"/><stop offset="1" stop-color="#dc9c17"/></linearGradient></defs>
<g clip-path="url(#cp90)"><g filter="url(#bl90)">
<rect x="-2" y="-2" width="88" height="51.6" fill="#e4e6ee"/>
<rect x="0" y="0" width="20" height="15" fill="#eceef4"/>
<rect x="-1" y="15.4" width="18.6" height="25.6" fill="#d2a01d"/>
<rect x="21.8" y="1.6" width="8.6" height="13.6" fill="#14151b"/>
<rect x="25" y="15" width="3" height="2.6" fill="#3b3f4a"/>
<rect x="48" y="6.6" width="8.4" height="10.4" fill="#efeae6"/><path d="M50 9 L54 8.4 L54.6 13 L50.6 14 Z" fill="#d9694a"/><rect x="51.4" y="9.4" width="2.4" height="3" fill="#e8b53a"/>
<rect x="60.4" y="0.6" width="9.8" height="8.2" fill="#d6cbc0"/><rect x="61" y="1.6" width="1.3" height="6.6" fill="#c8452e"/><rect x="62.8" y="1.6" width="1.3" height="6.6" fill="#3a6a9a"/><rect x="64.6" y="1.6" width="1.3" height="6.6" fill="#e2dfd5"/><rect x="66.4" y="1.6" width="1.3" height="6.6" fill="#d7a531"/><rect x="68" y="2.4" width="1.3" height="5.8" fill="#7a3a2a"/>
<rect x="59.6" y="8.8" width="11" height="1" fill="#c6b890"/>
<rect x="60" y="14.2" width="10.4" height="1.8" fill="#cdb055"/><rect x="62" y="12.4" width="5" height="1.8" fill="#b9a989"/>
<rect x="74.4" y="-2" width="12" height="20" fill="#171e2b"/>
<rect x="69.6" y="16.6" width="16" height="12.6" fill="#15161b"/>
<path d="M56.6 26.4 L86 24 V50 H61 Z" fill="#26262d"/>
<path d="M62 28 L80 27 L86 30 V36 L70 33 Z" fill="#b9aeb4"/>
<path d="M70 33 L86 36 V44 L76 40 Z" fill="#d8d2d0"/>
<path d="M57 30 H69 L72 50 H59 Z" fill="#1b1b21"/>
<path d="M15.4 50 C15.6 33 22 27.6 30 24.4 L44.6 24 C54 27 59 33 60.4 50 Z" fill="url(#jk90)"/>
<path d="M22 50 C24 42 27 38 29 36 M52 50 C50.6 42 48 38 46 36 M30 50 C31 44 33 41 34.6 39" stroke="#c98c12" stroke-width="0.8" fill="none"/>
<path d="M30.4 27.6 C31.4 33 34 36.6 37.4 37 C41 36.6 43.6 33 44.6 27.6 L44.4 24 H30.6 Z" fill="#121217"/>
<ellipse cx="37" cy="9" rx="8.7" ry="7" fill="#1c1a1d"/>
<ellipse cx="37.2" cy="19.4" rx="7.2" ry="9.8" fill="#b28c7c"/>
<path d="M29.6 13.4 C30 8 34 7.4 37.4 7.8 C41 7.4 44.6 8.6 45 13.6 C43 10.8 40 10.4 37.2 10.6 C34 10.4 31.4 11 29.6 13.4 Z" fill="#1c1a1d"/>
<rect x="31.2" y="15.6" width="5.4" height="3.4" rx="0.8" fill="#9b7a70" stroke="#26222a" stroke-width="0.8"/><rect x="38.2" y="15.6" width="5.4" height="3.4" rx="0.8" fill="#9b7a70" stroke="#26222a" stroke-width="0.8"/>
<path d="M34.4 25 C36 24.2 38.6 24.2 40.2 25 C39.8 27.6 38.4 28.6 37.3 28.6 C36.2 28.6 34.8 27.6 34.4 25 Z" fill="#4b332d"/>
<rect x="-1" y="42.8" width="26.6" height="5.6" fill="#2a2c33" opacity="0.8"/>
</g></g></svg>
<span style="left:1159.00px;top:133.91px;font-size:3.17296px;line-height:3.17296px;color:#e6e6e6;">Rafael Nepo</span>
<svg style="left:1154.6px;top:133.6px;" width="3.4" height="3.2" viewBox="0 0 3.4 3.2"><path d="M0 3.2 V2.4 H0.8 V3.2 Z M1.2 3.2 V1.4 H2 V3.2 Z M2.4 3.2 V0.2 H3.2 V3.2 Z" fill="#e0e0e0"/></svg>
<span style="left:816.00px;top:244.00px;font-size:9.9px;line-height:9.9px;color:#dedede;letter-spacing:-0.026px;">Navigation Drawer</span>
<div style="left:816.2px;top:255.6px;width:421.6px;height:237.6px;background:#1b1b1b;"></div>
<div style="left:816.2px;top:255.6px;width:421.6px;height:6.8px;background:#ffffff;"></div>
<div style="left:817px;top:256.6px;width:3.6px;height:4px;background:#2d8cff;border-radius:1px;"></div>
<span style="left:822.00px;top:258.48px;font-size:2.50497px;line-height:2.50497px;color:#555;">Zoom Meeting</span>
<div style="left:978px;top:255.6px;width:63.8px;height:6.8px;background:#36c31f;"></div>
<span style="left:982.00px;top:257.73px;font-size:3.27027px;line-height:3.27027px;color:#0d5a05;">You are viewing Rafael Nepo&#x27;s screen</span>
<div style="left:1041.8px;top:255.6px;width:31.4px;height:6.8px;background:#2a2a2a;"></div>
<span style="left:1048.00px;top:257.87px;font-size:3.11024px;line-height:3.11024px;color:#e0e0e0;">View Options ▾</span>
<div style="left:1205.6px;top:258.8px;width:3px;height:0.6px;background:#666;"></div>
<div style="left:1218.6px;top:257.6px;width:2.6px;height:2.6px;background:transparent;border:0.6px solid #666;box-sizing:border-box;"></div>
<svg style="left:1231px;top:257.4px;" width="3" height="3" viewBox="0 0 3 3"><path d="M0 0 L3 3 M3 0 L0 3" stroke="#555" stroke-width="0.6"/></svg>
<div style="left:823.2px;top:265.9px;width:3px;height:3px;background:#1fb53a;border-radius:50%;"></div>
<div style="left:831.4px;top:265.9px;width:3px;height:3px;background:#e5533c;border-radius:50%;"></div>
<span style="left:836.00px;top:266.58px;font-size:2.5057px;line-height:2.5057px;color:#a8a8a8;">Recording</span>
<div style="left:1222.4px;top:265.8px;width:3px;height:3px;background:#9a9a9a;border-radius:0.6px;"></div>
<span style="left:1226.60px;top:266.33px;font-size:2.79572px;line-height:2.79572px;color:#a8a8a8;">View</span>
<div style="left:816.2px;top:283.6px;width:333px;height:4.6px;background:#060606;"></div>
<div style="left:822.4px;top:285.2px;width:2px;height:1.5px;background:#6c6c6c;border-radius:0.6px;"></div>
<div style="left:827.4px;top:285.2px;width:6px;height:1.5px;background:#6c6c6c;border-radius:0.6px;"></div>
<div style="left:837px;top:285.2px;width:3.4px;height:1.5px;background:#6c6c6c;border-radius:0.6px;"></div>
<div style="left:843.8px;top:285.2px;width:4.4px;height:1.5px;background:#6c6c6c;border-radius:0.6px;"></div>
<div style="left:851.8px;top:285.2px;width:4.6px;height:1.5px;background:#6c6c6c;border-radius:0.6px;"></div>
<div style="left:860px;top:285.2px;width:8.6px;height:1.5px;background:#6c6c6c;border-radius:0.6px;"></div>
<div style="left:872px;top:285.2px;width:5px;height:1.5px;background:#6c6c6c;border-radius:0.6px;"></div>
<div style="left:1072px;top:285.2px;width:3px;height:1.5px;background:#686868;border-radius:0.6px;"></div>
<div style="left:1078.6px;top:285.2px;width:3px;height:1.5px;background:#686868;border-radius:0.6px;"></div>
<div style="left:1085px;top:285.2px;width:3.4px;height:1.5px;background:#686868;border-radius:0.6px;"></div>
<div style="left:1091.6px;top:285.2px;width:3px;height:1.5px;background:#686868;border-radius:0.6px;"></div>
<div style="left:1097.6px;top:285.2px;width:3px;height:1.5px;background:#686868;border-radius:0.6px;"></div>
<div style="left:1103.6px;top:285.2px;width:5px;height:1.5px;background:#686868;border-radius:0.6px;"></div>
<div style="left:1111.6px;top:285.2px;width:3px;height:1.5px;background:#686868;border-radius:0.6px;"></div>
<div style="left:1117.6px;top:285.2px;width:2.4px;height:1.5px;background:#686868;border-radius:0.6px;"></div>
<div style="left:1123px;top:285.2px;width:2.4px;height:1.5px;background:#686868;border-radius:0.6px;"></div>
<div style="left:1128.6px;top:285.2px;width:10px;height:1.5px;background:#686868;border-radius:0.6px;"></div>
<div style="left:1140.6px;top:285.2px;width:4.4px;height:1.5px;background:#686868;border-radius:0.6px;"></div>
<div style="left:816.2px;top:288px;width:4.8px;height:183.2px;background:#030303;"></div>
<div style="left:1146.2px;top:288px;width:3px;height:183.2px;background:#050505;"></div>
<div style="left:821px;top:288px;width:325.2px;height:183.2px;background:#f9f9f9;"></div>
<div style="left:821px;top:393.5px;width:77.4px;height:77.7px;background:#fdd633;"></div>
<div style="left:1112px;top:305.2px;width:5.6px;height:4.2px;background:#2b2b2b;"></div>
<div style="left:1119.2px;top:305.1px;width:4.5px;height:4.5px;background:#2b2b2b;border-radius:50%;"></div>
<div style="left:1124.6px;top:305.1px;width:4.5px;height:4.5px;background:#2b2b2b;border-radius:50%;"></div>
<span style="left:970.40px;top:355.00px;font-size:25.6px;line-height:25.6px;color:#2b2b2b;font-weight:700;letter-spacing:1.316px;">Navigation</span>
<span style="left:970.40px;top:381.00px;font-size:25.6px;line-height:25.6px;color:#2b2b2b;font-weight:700;letter-spacing:1.536px;">Drawer</span>
<div style="left:838.6px;top:309px;width:41px;height:140px;background:#ffffff;box-shadow:0 0.6px 2px rgba(0,0,0,.18);"></div>
<div style="left:841px;top:312.4px;width:9.4px;height:9.4px;background:#2a2a2a;border-radius:50%;"></div>
<div style="left:843.6px;top:314.4px;width:4px;height:4.4px;background:#555;border-radius:50%;"></div>
<span style="left:852.60px;top:315.41px;font-size:2.58615px;line-height:2.58615px;color:#333;font-weight:700;">Arthur Max</span>
<span style="left:852.60px;top:319.09px;font-size:2.25591px;line-height:2.25591px;color:#b0b0b0;">Arthur Max</span>
<svg style="left:873.6px;top:316.6px;" width="2.8" height="1.8" viewBox="0 0 2.8 1.8"><path d="M0.2 0.3 L1.4 1.5 L2.6 0.3" fill="none" stroke="#777" stroke-width="0.5"/></svg>
<span style="left:841.40px;top:329.73px;font-size:3.62975px;line-height:3.62975px;color:#3a3a3a;font-weight:700;">Hollow Knight</span>
<span style="left:841.40px;top:334.98px;font-size:2.14916px;line-height:2.14916px;color:#a6a6a6;">Owned by Arthur Max</span>
<div style="left:840.8px;top:341px;width:37px;height:5.2px;background:#fff;border:0.5px solid #dcdcdc;border-radius:2px;box-sizing:border-box;"></div>
<div style="left:842.6px;top:342.6px;width:1.8px;height:1.8px;background:transparent;border:0.5px solid #888;border-radius:50%;box-sizing:border-box;"></div>
<span style="left:846.00px;top:342.99px;font-size:2.01915px;line-height:2.01915px;color:#c4c4c4;">Search</span>
<div style="left:838.6px;top:347.6px;width:41px;height:0.5px;background:#e9e9e9;"></div>
<span style="left:841.40px;top:351.31px;font-size:2.94307px;line-height:2.94307px;color:#444;font-weight:700;">Filter</span>
<svg style="left:873.6px;top:351.6px;" width="2.8" height="1.8" viewBox="0 0 2.8 1.8"><path d="M0.2 0.3 L1.4 1.5 L2.6 0.3" fill="none" stroke="#666" stroke-width="0.5"/></svg>
<div style="left:838.6px;top:357.2px;width:41px;height:0.5px;background:#e9e9e9;"></div>
<span style="left:841.40px;top:360.88px;font-size:2.97388px;line-height:2.97388px;color:#444;font-weight:700;">Navigate</span>
<svg style="left:873.6px;top:361.2px;" width="2.8" height="1.8" viewBox="0 0 2.8 1.8"><path d="M0.2 0.3 L1.4 1.5 L2.6 0.3" fill="none" stroke="#666" stroke-width="0.5"/></svg>
<div style="left:838.6px;top:366.8px;width:41px;height:0.5px;background:#e9e9e9;"></div>
<span style="left:841.40px;top:370.63px;font-size:2.8px;line-height:2.8px;color:#444;font-weight:700;">Sort</span>
<svg style="left:873.6px;top:370.8px;" width="2.8" height="1.8" viewBox="0 0 2.8 1.8"><path d="M0.2 0.3 L1.4 1.5 L2.6 0.3" fill="none" stroke="#666" stroke-width="0.5"/></svg>
<div style="left:838.6px;top:376.4px;width:41px;height:0.5px;background:#e9e9e9;"></div>
<div style="left:838.6px;top:437.4px;width:41px;height:0.5px;background:#ececec;"></div>
<div style="left:841.6px;top:441.4px;width:3px;height:2.2px;background:#333;"></div>
<div style="left:845.2px;top:441.3px;width:2.4px;height:2.4px;background:#333;border-radius:50%;"></div>
<div style="left:847.8px;top:441.3px;width:2.4px;height:2.4px;background:#333;border-radius:50%;"></div>
<div style="left:881.8px;top:309px;width:41px;height:140px;background:#ffffff;box-shadow:0 0.6px 2px rgba(0,0,0,.18);"></div>
<div style="left:884.2px;top:312.4px;width:9.4px;height:9.4px;background:#2a2a2a;border-radius:50%;"></div>
<div style="left:886.8px;top:314.4px;width:4px;height:4.4px;background:#555;border-radius:50%;"></div>
<span style="left:895.80px;top:315.41px;font-size:2.58615px;line-height:2.58615px;color:#333;font-weight:700;">Arthur Max</span>
<span style="left:895.80px;top:319.09px;font-size:2.25591px;line-height:2.25591px;color:#b0b0b0;">Arthur Max</span>
<svg style="left:916.8px;top:316.6px;" width="2.8" height="1.8" viewBox="0 0 2.8 1.8"><path d="M0.2 0.3 L1.4 1.5 L2.6 0.3" fill="none" stroke="#777" stroke-width="0.5"/></svg>
<span style="left:884.60px;top:329.73px;font-size:3.62975px;line-height:3.62975px;color:#3a3a3a;font-weight:700;">Hollow Knight</span>
<span style="left:884.60px;top:334.98px;font-size:2.14916px;line-height:2.14916px;color:#a6a6a6;">Owned by Arthur Max</span>
<div style="left:884px;top:341px;width:37px;height:5.2px;background:#fff;border:0.5px solid #dcdcdc;border-radius:2px;box-sizing:border-box;"></div>
<div style="left:885.8px;top:342.6px;width:1.8px;height:1.8px;background:transparent;border:0.5px solid #888;border-radius:50%;box-sizing:border-box;"></div>
<span style="left:889.20px;top:342.99px;font-size:2.01915px;line-height:2.01915px;color:#c4c4c4;">Search</span>
<div style="left:881.8px;top:347.6px;width:41px;height:0.5px;background:#e9e9e9;"></div>
<span style="left:884.60px;top:351.31px;font-size:2.94307px;line-height:2.94307px;color:#444;font-weight:700;">Filter</span>
<svg style="left:916.8px;top:351.6px;" width="2.8" height="1.8" viewBox="0 0 2.8 1.8"><path d="M0.2 1.5 L1.4 0.3 L2.6 1.5" fill="none" stroke="#666" stroke-width="0.5"/></svg>
<span style="left:885.20px;top:357.25px;font-size:1.94654px;line-height:1.94654px;color:#333;font-weight:700;">Photos</span>
<div style="left:916.6px;top:356.7px;width:2.3px;height:2.3px;background:#f5c22b;border-radius:0.5px;"></div>
<span style="left:885.20px;top:361.98px;font-size:2.03021px;line-height:2.03021px;color:#333;font-weight:700;">Images</span>
<div style="left:916.6px;top:361.5px;width:2.3px;height:2.3px;background:#f5c22b;border-radius:0.5px;"></div>
<span style="left:885.20px;top:366.84px;font-size:1.95981px;line-height:1.95981px;color:#333;font-weight:700;">Videos</span>
<div style="left:916.6px;top:366.3px;width:2.3px;height:2.3px;background:#f5c22b;border-radius:0.5px;"></div>
<span style="left:885.20px;top:371.64px;font-size:1.96571px;line-height:1.96571px;color:#333;font-weight:700;">Websites</span>
<div style="left:916.6px;top:371.1px;width:2.3px;height:2.3px;background:#9a9a9a;border-radius:0.5px;"></div>
<span style="left:885.20px;top:376.22px;font-size:2.21732px;line-height:2.21732px;color:#333;font-weight:700;">Text</span>
<div style="left:916.6px;top:375.9px;width:2.3px;height:2.3px;background:#9a9a9a;border-radius:0.5px;"></div>
<div style="left:881.8px;top:382.6px;width:41px;height:0.5px;background:#e9e9e9;"></div>
<span style="left:884.60px;top:386.78px;font-size:2.97388px;line-height:2.97388px;color:#444;font-weight:700;">Navigate</span>
<svg style="left:916.8px;top:387.1px;" width="2.8" height="1.8" viewBox="0 0 2.8 1.8"><path d="M0.2 0.3 L1.4 1.5 L2.6 0.3" fill="none" stroke="#666" stroke-width="0.5"/></svg>
<div style="left:881.8px;top:392.8px;width:41px;height:0.5px;background:#e9e9e9;"></div>
<span style="left:884.60px;top:396.43px;font-size:2.8px;line-height:2.8px;color:#444;font-weight:700;">Sort</span>
<svg style="left:916.8px;top:396.6px;" width="2.8" height="1.8" viewBox="0 0 2.8 1.8"><path d="M0.2 0.3 L1.4 1.5 L2.6 0.3" fill="none" stroke="#666" stroke-width="0.5"/></svg>
<div style="left:881.8px;top:402.4px;width:41px;height:0.5px;background:#e9e9e9;"></div>
<div style="left:881.8px;top:437.4px;width:41px;height:0.5px;background:#ececec;"></div>
<div style="left:884.8px;top:441.4px;width:3px;height:2.2px;background:#333;"></div>
<div style="left:888.4px;top:441.3px;width:2.4px;height:2.4px;background:#333;border-radius:50%;"></div>
<div style="left:891px;top:441.3px;width:2.4px;height:2.4px;background:#333;border-radius:50%;"></div>
<div style="left:924.6px;top:309px;width:41px;height:140px;background:#ffffff;box-shadow:0 0.6px 2px rgba(0,0,0,.18);"></div>
<div style="left:927px;top:312.4px;width:9.4px;height:9.4px;background:#2a2a2a;border-radius:50%;"></div>
<div style="left:929.6px;top:314.4px;width:4px;height:4.4px;background:#555;border-radius:50%;"></div>
<span style="left:938.60px;top:315.41px;font-size:2.58615px;line-height:2.58615px;color:#333;font-weight:700;">Arthur Max</span>
<span style="left:938.60px;top:319.09px;font-size:2.25591px;line-height:2.25591px;color:#b0b0b0;">Arthur Max</span>
<svg style="left:959.6px;top:316.6px;" width="2.8" height="1.8" viewBox="0 0 2.8 1.8"><path d="M0.2 0.3 L1.4 1.5 L2.6 0.3" fill="none" stroke="#777" stroke-width="0.5"/></svg>
<span style="left:927.40px;top:329.73px;font-size:3.62975px;line-height:3.62975px;color:#3a3a3a;font-weight:700;">Hollow Knight</span>
<span style="left:927.40px;top:334.98px;font-size:2.14916px;line-height:2.14916px;color:#a6a6a6;">Owned by Arthur Max</span>
<div style="left:926.8px;top:341px;width:29.6px;height:5.2px;background:#fff;border:0.5px solid #dcdcdc;border-radius:2px;box-sizing:border-box;"></div>
<div style="left:928.6px;top:342.6px;width:1.8px;height:1.8px;background:transparent;border:0.5px solid #888;border-radius:50%;box-sizing:border-box;"></div>
<span style="left:932.00px;top:342.99px;font-size:2.01915px;line-height:2.01915px;color:#c4c4c4;">Search</span>
<div style="left:957.2px;top:341px;width:6.6px;height:5.2px;background:#f5c22b;border-radius:1px;"></div>
<div style="left:959px;top:342.8px;width:3px;height:1.6px;background:#6b5a1e;border-radius:0.4px;"></div>
<div style="left:927.2px;top:348.2px;width:12.4px;height:3.6px;background:#f6c530;border-radius:1.8px;"></div>
<span style="left:928.60px;top:349.60px;font-size:1.65513px;line-height:1.65513px;color:#5a4a12;font-weight:700;">Photos</span>
<div style="left:941.6px;top:348.2px;width:19px;height:3.6px;background:#f6c530;border-radius:1.8px;"></div>
<span style="left:943.20px;top:349.41px;font-size:1.87443px;line-height:1.87443px;color:#5a4a12;font-weight:700;">Illustrations</span>
<div style="left:927.2px;top:353.6px;width:21px;height:3.6px;background:#f6c530;border-radius:1.8px;"></div>
<span style="left:928.60px;top:355.02px;font-size:1.63514px;line-height:1.63514px;color:#3a300c;font-weight:700;">Screenshots.com</span>
<div style="left:949.8px;top:353.6px;width:12.4px;height:3.6px;background:#fff;border:0.5px solid #d6d6d6;border-radius:1.8px;box-sizing:border-box;"></div>
<span style="left:952.00px;top:354.83px;font-size:1.73995px;line-height:1.73995px;color:#bbb;">Add +</span>
<div style="left:927.2px;top:358.8px;width:18.6px;height:3.6px;background:#fff;border:0.5px solid #d6d6d6;border-radius:1.8px;box-sizing:border-box;"></div>
<span style="left:929.00px;top:360.00px;font-size:1.77778px;line-height:1.77778px;color:#bbb;">Clear filters</span>
<div style="left:924.6px;top:365.6px;width:41px;height:0.5px;background:#e9e9e9;"></div>
<span style="left:927.40px;top:369.28px;font-size:2.97388px;line-height:2.97388px;color:#444;font-weight:700;">Navigate</span>
<svg style="left:959.6px;top:369.6px;" width="2.8" height="1.8" viewBox="0 0 2.8 1.8"><path d="M0.2 0.3 L1.4 1.5 L2.6 0.3" fill="none" stroke="#666" stroke-width="0.5"/></svg>
<div style="left:924.6px;top:375.4px;width:41px;height:0.5px;background:#e9e9e9;"></div>
<span style="left:927.40px;top:378.93px;font-size:2.8px;line-height:2.8px;color:#444;font-weight:700;">Sort</span>
<svg style="left:959.6px;top:379.1px;" width="2.8" height="1.8" viewBox="0 0 2.8 1.8"><path d="M0.2 0.3 L1.4 1.5 L2.6 0.3" fill="none" stroke="#666" stroke-width="0.5"/></svg>
<div style="left:924.6px;top:384.8px;width:41px;height:0.5px;background:#e9e9e9;"></div>
<div style="left:924.6px;top:437.4px;width:41px;height:0.5px;background:#ececec;"></div>
<div style="left:927.6px;top:441.4px;width:3px;height:2.2px;background:#333;"></div>
<div style="left:931.2px;top:441.3px;width:2.4px;height:2.4px;background:#333;border-radius:50%;"></div>
<div style="left:933.8px;top:441.3px;width:2.4px;height:2.4px;background:#333;border-radius:50%;"></div>
<div style="left:826.8px;top:480.6px;width:2.2px;height:5px;background:#777;border-radius:1.1px;"></div>
<svg style="left:824.4px;top:479.8px;" width="7" height="7" viewBox="0 0 7 7"><path d="M6.4 0.4 L0.6 6.6" stroke="#b43a3a" stroke-width="0.8"/></svg>
<span style="left:822.40px;top:489.04px;font-size:3.14371px;line-height:3.14371px;color:#868686;">Unmute</span>
<div style="left:849.2px;top:481.6px;width:4.6px;height:4px;background:#9a9a9a;border-radius:0.8px;"></div>
<svg style="left:853.8px;top:481.6px;" width="2.4" height="4" viewBox="0 0 2.4 4"><path d="M0 2 L2.4 0.2 V3.8 Z" fill="#9a9a9a"/></svg>
<svg style="left:848.9px;top:479.8px;" width="7" height="7" viewBox="0 0 7 7"><path d="M6.4 0.4 L0.6 6.6" stroke="#b43a3a" stroke-width="0.8"/></svg>
<span style="left:844.90px;top:489.12px;font-size:3.04323px;line-height:3.04323px;color:#868686;">Start Video</span>
<span style="left:836.50px;top:483.41px;font-size:4px;line-height:4px;color:#5a5a5a;">^</span>
<span style="left:862.00px;top:483.41px;font-size:4px;line-height:4px;color:#5a5a5a;">^</span>
<div style="left:990.6px;top:481.2px;width:2.6px;height:2.6px;background:#a6a6a6;border-radius:50%;"></div>
<div style="left:993.8px;top:481.2px;width:2.6px;height:2.6px;background:#a6a6a6;border-radius:50%;"></div>
<div style="left:989.8px;top:484px;width:7.8px;height:2.2px;background:#a6a6a6;border-radius:1.2px 1.2px 0 0;"></div>
<span style="left:985.70px;top:488.94px;font-size:3.25512px;line-height:3.25512px;color:#868686;">Participants</span>
<span style="left:998.80px;top:481.09px;font-size:3.2px;line-height:3.2px;color:#7a7a7a;">27</span>
<div style="left:1018.4px;top:481.2px;width:6px;height:4.2px;background:#a6a6a6;border-radius:1.6px;"></div>
<span style="left:1017.90px;top:488.89px;font-size:3.3148px;line-height:3.3148px;color:#868686;">Chat</span>
<div style="left:1041.5px;top:481.6px;width:6.6px;height:4.8px;background:#22c55a;border-radius:1.1px;"></div>
<span style="left:1035.50px;top:489.12px;font-size:3.04285px;line-height:3.04285px;color:#1fae4c;">Share Screen</span>
<div style="left:1065.9px;top:481px;width:5.2px;height:5.2px;background:#a6a6a6;border-radius:50%;"></div>
<span style="left:1063.50px;top:489.07px;font-size:3.10132px;line-height:3.10132px;color:#868686;">Record</span>
<div style="left:1087px;top:481px;width:5.2px;height:5.2px;background:#a6a6a6;border-radius:50%;"></div>
<span style="left:1082.80px;top:489.11px;font-size:3.05891px;line-height:3.05891px;color:#868686;">Reactions</span>
<div style="left:1218.8px;top:482.8px;width:16px;height:7.1px;background:#c3222c;border-radius:1.8px;"></div>
<span style="left:1222.60px;top:485.19px;font-size:2.96727px;line-height:2.96727px;color:#f0c8c8;font-weight:700;">Leave</span>
<svg style="left:1152.8px;top:354.2px;" width="84" height="47.6" viewBox="0 0 84 47.6"><defs><filter id="bl354" x="-5%" y="-5%" width="110%" height="110%"><feGaussianBlur stdDeviation="0.7"/></filter>
<clipPath id="cp354"><rect x="0" y="0" width="84" height="47.6"/></clipPath>
<linearGradient id="jk354" x1="0" x2="1"><stop offset="0" stop-color="#d99a16"/><stop offset=".5" stop-color="#f2b21e"/><stop offset="1" stop-color="#dc9c17"/></linearGradient></defs>
<g clip-path="url(#cp354)"><g filter="url(#bl354)">
<rect x="-2" y="-2" width="88" height="51.6" fill="#e4e6ee"/>
<rect x="0" y="0" width="20" height="15" fill="#eceef4"/>
<rect x="-1" y="15.4" width="18.6" height="25.6" fill="#d2a01d"/>
<rect x="21.8" y="1.6" width="8.6" height="13.6" fill="#14151b"/>
<rect x="25" y="15" width="3" height="2.6" fill="#3b3f4a"/>
<rect x="48" y="6.6" width="8.4" height="10.4" fill="#efeae6"/><path d="M50 9 L54 8.4 L54.6 13 L50.6 14 Z" fill="#d9694a"/><rect x="51.4" y="9.4" width="2.4" height="3" fill="#e8b53a"/>
<rect x="60.4" y="0.6" width="9.8" height="8.2" fill="#d6cbc0"/><rect x="61" y="1.6" width="1.3" height="6.6" fill="#c8452e"/><rect x="62.8" y="1.6" width="1.3" height="6.6" fill="#3a6a9a"/><rect x="64.6" y="1.6" width="1.3" height="6.6" fill="#e2dfd5"/><rect x="66.4" y="1.6" width="1.3" height="6.6" fill="#d7a531"/><rect x="68" y="2.4" width="1.3" height="5.8" fill="#7a3a2a"/>
<rect x="59.6" y="8.8" width="11" height="1" fill="#c6b890"/>
<rect x="60" y="14.2" width="10.4" height="1.8" fill="#cdb055"/><rect x="62" y="12.4" width="5" height="1.8" fill="#b9a989"/>
<rect x="74.4" y="-2" width="12" height="20" fill="#171e2b"/>
<rect x="69.6" y="16.6" width="16" height="12.6" fill="#15161b"/>
<path d="M56.6 26.4 L86 24 V50 H61 Z" fill="#26262d"/>
<path d="M62 28 L80 27 L86 30 V36 L70 33 Z" fill="#b9aeb4"/>
<path d="M70 33 L86 36 V44 L76 40 Z" fill="#d8d2d0"/>
<path d="M57 30 H69 L72 50 H59 Z" fill="#1b1b21"/>
<path d="M15.4 50 C15.6 33 22 27.6 30 24.4 L44.6 24 C54 27 59 33 60.4 50 Z" fill="url(#jk354)"/>
<path d="M22 50 C24 42 27 38 29 36 M52 50 C50.6 42 48 38 46 36 M30 50 C31 44 33 41 34.6 39" stroke="#c98c12" stroke-width="0.8" fill="none"/>
<path d="M30.4 27.6 C31.4 33 34 36.6 37.4 37 C41 36.6 43.6 33 44.6 27.6 L44.4 24 H30.6 Z" fill="#121217"/>
<ellipse cx="37" cy="9" rx="8.7" ry="7" fill="#1c1a1d"/>
<ellipse cx="37.2" cy="19.4" rx="7.2" ry="9.8" fill="#b28c7c"/>
<path d="M29.6 13.4 C30 8 34 7.4 37.4 7.8 C41 7.4 44.6 8.6 45 13.6 C43 10.8 40 10.4 37.2 10.6 C34 10.4 31.4 11 29.6 13.4 Z" fill="#1c1a1d"/>
<rect x="31.2" y="15.6" width="5.4" height="3.4" rx="0.8" fill="#9b7a70" stroke="#26222a" stroke-width="0.8"/><rect x="38.2" y="15.6" width="5.4" height="3.4" rx="0.8" fill="#9b7a70" stroke="#26222a" stroke-width="0.8"/>
<path d="M34.4 25 C36 24.2 38.6 24.2 40.2 25 C39.8 27.6 38.4 28.6 37.3 28.6 C36.2 28.6 34.8 27.6 34.4 25 Z" fill="#4b332d"/>
<rect x="-1" y="42.8" width="26.6" height="5.6" fill="#2a2c33" opacity="0.8"/>
</g></g></svg>
<span style="left:1159.00px;top:397.91px;font-size:3.17296px;line-height:3.17296px;color:#e6e6e6;">Rafael Nepo</span>
<svg style="left:1154.6px;top:397.6px;" width="3.4" height="3.2" viewBox="0 0 3.4 3.2"><path d="M0 3.2 V2.4 H0.8 V3.2 Z M1.2 3.2 V1.4 H2 V3.2 Z M2.4 3.2 V0.2 H3.2 V3.2 Z" fill="#e0e0e0"/></svg>
<span style="left:816.00px;top:507.00px;font-size:9.9px;line-height:9.9px;color:#dedede;letter-spacing:-0.036px;">filter sort and naviage</span>
<span style="left:816.00px;top:529.00px;font-size:9.9px;line-height:9.9px;color:#dedede;letter-spacing:0.051px;">by type</span>
<span style="left:816.00px;top:551.00px;font-size:9.9px;line-height:9.9px;color:#dedede;letter-spacing:-0.083px;">oldest to newsest</span>
<span style="left:816.00px;top:572.00px;font-size:9.9px;line-height:9.9px;color:#dedede;letter-spacing:-0.088px;">back of the cards</span>
<span style="left:816.00px;top:587.00px;font-size:9.9px;line-height:9.9px;color:#dedede;letter-spacing:0.039px;">textyou can find it</span>
<div style="left:831.2px;top:613px;width:2.6px;height:2.6px;background:#dcdcdc;border-radius:50%;"></div>
</div></div>
<div style="left:285px;top:759.6px;width:995px;height:1px;background:#414141;"></div>
<span style="left:300.20px;top:770.00px;font-size:7.8px;line-height:7.8px;color:#8f8f8f;letter-spacing:-0.480px;">TERMINAL</span>
<span style="left:352.60px;top:770.00px;font-size:7.8px;line-height:7.8px;color:#8f8f8f;letter-spacing:-0.743px;">PROBLEMS</span>
<div style="left:397px;top:767.2px;width:19.2px;height:10.8px;background:#4d4d4d;border-radius:5.4px;"></div>
<span style="left:400.60px;top:770.00px;font-size:7.9px;line-height:7.9px;color:#ffffff;letter-spacing:-0.324px;">282</span>
<span style="left:430.80px;top:770.00px;font-size:7.8px;line-height:7.8px;color:#e7e7e7;letter-spacing:-0.477px;">OUTPUT</span>
<div style="left:430.6px;top:782.6px;width:29.6px;height:0.9px;background:#e7e7e7;"></div>
<span style="left:476.50px;top:770.00px;font-size:7.8px;line-height:7.8px;color:#8f8f8f;letter-spacing:-0.656px;">DEBUG CONSOLE</span>
<div style="left:1063.2px;top:764.1px;width:118px;height:16.7px;background:#3c3c3c;"></div>
<span style="left:1069.80px;top:769.00px;font-size:9.4px;line-height:9.4px;color:#f0f0f0;letter-spacing:-0.492px;">Foam</span>
<svg style="left:1169.2px;top:769.85px;" width="6.8" height="5.1" viewBox="0 0 8 6"><path d="M0.9 1.4 L4 4.5 L7.1 1.4" fill="none" stroke="#d0d0d0" stroke-width="1"/></svg>
<svg style="left:1186.2px;top:767.3px;" width="10.6" height="10.6" viewBox="0 0 16 16"><path d="M1 3 H15 M1 6.4 H15 M1 9.8 H15 M1 13.2 H9.4" fill="none" stroke="#e2e2e2" stroke-width="1.35"/><path d="M11.4 11.6 L14.8 15 M14.8 11.6 L11.4 15" stroke="#e2e2e2" stroke-width="1.1"/></svg>
<svg style="left:1204.8px;top:767.2px;" width="10" height="10.4" viewBox="0 0 16 16"><rect x="2.2" y="7" width="11.6" height="7.4" rx="0.8" fill="none" stroke="#d8d8d8" stroke-width="1.5"/><path d="M4.6 7 V4.6 Q4.6 1.6 8 1.6 Q11.4 1.6 11.4 4.6 V7" fill="none" stroke="#d8d8d8" stroke-width="1.5"/></svg>
<svg style="left:1223px;top:767.5px;" width="10" height="10" viewBox="0 0 16 16"><path d="M4.5 4.5 H13.5 V14.5 H4.5 Z M4.5 11.5 H1.8 V2.2 L4.2 1.2 H10.5 V4.5" fill="none" stroke="#5a5a5a" stroke-width="1.3"/></svg>
<svg style="left:1241.6px;top:769.6px;" width="8" height="6" viewBox="0 0 8 6"><path d="M0.9 4.6 L4 1.5 L7.1 4.6" fill="none" stroke="#d8d8d8" stroke-width="1.1"/></svg>
<svg style="left:1260.4px;top:769.2px;" width="6.6" height="6.6" viewBox="0 0 6.6 6.6"><path d="M0.4 0.4 L6.2 6.2 M6.2 0.4 L0.4 6.2" stroke="#d8d8d8" stroke-width="1.05"/></svg>
<div class="clip" style="left:285px;top:784px;width:995px;height:223.7px;">
<span style="left:14.20px;top:-5.00px;font-family:'Liberation Mono', monospace;font-size:9.75px;line-height:9.75px;letter-spacing:-0.505px;color:#cccccc;">[info - 18:58:25] Found: </span>
<span style="left:147.82px;top:-5.00px;font-family:'Liberation Mono', monospace;font-size:9.75px;line-height:9.75px;letter-spacing:-0.505px;color:#cccccc;">file:///c%3A/AOPIDOX/gyuri/docs/how-to/paste-images-from-clipboard.md</span>
<div style="left:147.825px;top:5.2px;width:368.805px;height:0.9px;background:#cccccc;"></div>
<span style="left:14.20px;top:12.00px;font-family:'Liberation Mono', monospace;font-size:9.75px;line-height:9.75px;letter-spacing:-0.505px;color:#cccccc;">[info - 18:58:25] Found: </span>
<span style="left:147.82px;top:12.00px;font-family:'Liberation Mono', monospace;font-size:9.75px;line-height:9.75px;letter-spacing:-0.505px;color:#cccccc;">file:///c%3A/AOPIDOX/gyuri/docs/how-to/use-keyboard-shortcuts-for-editing.md</span>
<div style="left:147.825px;top:21.867px;width:406.22px;height:0.9px;background:#cccccc;"></div>
<span style="left:14.20px;top:28.00px;font-family:'Liberation Mono', monospace;font-size:9.75px;line-height:9.75px;letter-spacing:-0.505px;color:#cccccc;">[info - 18:58:25] Found: </span>
<span style="left:147.82px;top:28.00px;font-family:'Liberation Mono', monospace;font-size:9.75px;line-height:9.75px;letter-spacing:-0.505px;color:#cccccc;">file:///c%3A/AOPIDOX/gyuri/docs/how-to/write-notes-in-foam.md</span>
<div style="left:147.825px;top:38.534px;width:326.045px;height:0.9px;background:#cccccc;"></div>
<span style="left:14.20px;top:45.00px;font-family:'Liberation Mono', monospace;font-size:9.75px;line-height:9.75px;letter-spacing:-0.505px;color:#cccccc;">[info - 18:58:25] Found: </span>
<span style="left:147.82px;top:45.00px;font-family:'Liberation Mono', monospace;font-size:9.75px;line-height:9.75px;letter-spacing:-0.505px;color:#cccccc;">file:///c%3A/AOPIDOX/gyuri/FoT%202021%2006%2025.md</span>
<div style="left:147.825px;top:55.201px;width:267.25px;height:0.9px;background:#cccccc;"></div>
<span style="left:14.20px;top:62.00px;font-family:'Liberation Mono', monospace;font-size:9.75px;line-height:9.75px;letter-spacing:-0.505px;color:#cccccc;">[info - 18:58:25] Found: </span>
<span style="left:147.82px;top:62.00px;font-family:'Liberation Mono', monospace;font-size:9.75px;line-height:9.75px;letter-spacing:-0.505px;color:#cccccc;">file:///c%3A/AOPIDOX/gyuri/FtFI%202021%2007%2028.md</span>
<div style="left:147.825px;top:71.868px;width:272.595px;height:0.9px;background:#cccccc;"></div>
<span style="left:14.20px;top:78.00px;font-family:'Liberation Mono', monospace;font-size:9.75px;line-height:9.75px;letter-spacing:-0.505px;color:#cccccc;">[info - 18:58:25] Found: </span>
<span style="left:147.82px;top:78.00px;font-family:'Liberation Mono', monospace;font-size:9.75px;line-height:9.75px;letter-spacing:-0.505px;color:#cccccc;">file:///c%3A/AOPIDOX/gyuri/getting-started.md</span>
<div style="left:147.825px;top:88.535px;width:240.525px;height:0.9px;background:#cccccc;"></div>
<span style="left:14.20px;top:95.00px;font-family:'Liberation Mono', monospace;font-size:9.75px;line-height:9.75px;letter-spacing:-0.505px;color:#cccccc;">[info - 18:58:25] Found: </span>
<span style="left:147.82px;top:95.00px;font-family:'Liberation Mono', monospace;font-size:9.75px;line-height:9.75px;letter-spacing:-0.505px;color:#cccccc;">file:///c%3A/AOPIDOX/gyuri/I%20Annotate%202021%20Dan%20Whaley.md</span>
<div style="left:147.825px;top:105.202px;width:342.08px;height:0.9px;background:#cccccc;"></div>
<span style="left:14.20px;top:112.00px;font-family:'Liberation Mono', monospace;font-size:9.75px;line-height:9.75px;letter-spacing:-0.505px;color:#cccccc;">[info - 18:58:25] Found: </span>
<span style="left:147.82px;top:112.00px;font-family:'Liberation Mono', monospace;font-size:9.75px;line-height:9.75px;letter-spacing:-0.505px;color:#cccccc;">file:///c%3A/AOPIDOX/gyuri/iannotate2021thu.md</span>
<div style="left:147.825px;top:121.869px;width:245.87px;height:0.9px;background:#cccccc;"></div>
<span style="left:14.20px;top:128.00px;font-family:'Liberation Mono', monospace;font-size:9.75px;line-height:9.75px;letter-spacing:-0.505px;color:#cccccc;">[info - 18:58:25] Found: </span>
<span style="left:147.82px;top:128.00px;font-family:'Liberation Mono', monospace;font-size:9.75px;line-height:9.75px;letter-spacing:-0.505px;color:#cccccc;">file:///c%3A/AOPIDOX/gyuri/iannotate2021Tuesday.md</span>
<div style="left:147.825px;top:138.536px;width:267.25px;height:0.9px;background:#cccccc;"></div>
<span style="left:14.20px;top:145.00px;font-family:'Liberation Mono', monospace;font-size:9.75px;line-height:9.75px;letter-spacing:-0.505px;color:#cccccc;">[info - 18:58:25] Found: </span>
<span style="left:147.82px;top:145.00px;font-family:'Liberation Mono', monospace;font-size:9.75px;line-height:9.75px;letter-spacing:-0.505px;color:#cccccc;">file:///c%3A/AOPIDOX/gyuri/inbox.md</span>
<div style="left:147.825px;top:155.203px;width:187.075px;height:0.9px;background:#cccccc;"></div>
<div style="left:340.845px;top:157.77px;width:4.4px;height:16.667px;background:#383b3f;border-radius:0 1.5px 1.5px 0;"></div>
<span style="left:14.20px;top:162.00px;font-family:'Liberation Mono', monospace;font-size:9.75px;line-height:9.75px;letter-spacing:-0.505px;color:#cccccc;">[info - 18:58:25] Found: </span>
<span style="left:147.82px;top:162.00px;font-family:'Liberation Mono', monospace;font-size:9.75px;line-height:9.75px;letter-spacing:-0.505px;color:#cccccc;">file:///c%3A/AOPIDOX/gyuri/readme.md</span>
<div style="left:147.825px;top:171.87px;width:192.42px;height:0.9px;background:#cccccc;"></div>
<div style="left:13.6px;top:174.437px;width:316.755px;height:16.667px;background:#383b3f;border-radius:1.5px;"></div>
<span style="left:14.20px;top:178.00px;font-family:'Liberation Mono', monospace;font-size:9.75px;line-height:9.75px;letter-spacing:-0.505px;color:#cccccc;">[info - 18:58:25] Found: </span>
<span style="left:147.82px;top:178.00px;font-family:'Liberation Mono', monospace;font-size:9.75px;line-height:9.75px;letter-spacing:-0.505px;color:#cccccc;">file:///c%3A/AOPIDOX/gyuri/todo.md</span>
<div style="left:147.825px;top:188.537px;width:181.73px;height:0.9px;background:#cccccc;"></div>
<span style="left:14.20px;top:195.00px;font-family:'Liberation Mono', monospace;font-size:9.75px;line-height:9.75px;letter-spacing:-0.505px;color:#cccccc;">[info - 18:58:27] Loaded 21 notes</span>
</div>
<div style="left:285px;top:783.8px;width:995px;height:3px;background:linear-gradient(rgba(0,0,0,.5),rgba(0,0,0,0));"></div>
<div style="left:1271.5px;top:998.2px;width:8.5px;height:0.8px;background:#6a6a6a;"></div>
<div style="left:2px;top:1007.7px;width:1278px;height:16.3px;background:#007acc;"></div>
<div style="left:2px;top:1007.7px;width:24.2px;height:16.3px;background:#16825d;"></div>
<svg style="left:10px;top:1011.2px;" width="8.6" height="8.6" viewBox="0 0 12 12"><path d="M1 3.6 L4.6 7.2 L1 10.8 M11 1.2 L7.4 4.8 L11 8.4" fill="none" stroke="#fff" stroke-width="1.45"/></svg>
<svg style="left:31.6px;top:1010.6px;" width="9" height="10.4" viewBox="0 0 12 14"><circle cx="3" cy="2.6" r="1.7" fill="none" stroke="#fff" stroke-width="1.3"/><circle cx="3" cy="11.4" r="1.7" fill="none" stroke="#fff" stroke-width="1.3"/><circle cx="9.4" cy="4.4" r="1.7" fill="none" stroke="#fff" stroke-width="1.3"/><path d="M3 4.3 V9.7 M9.4 6.1 Q9.4 8.4 3.4 9.4" fill="none" stroke="#fff" stroke-width="1.3"/></svg>
<span style="left:43.20px;top:1012.00px;font-size:8.5px;line-height:8.5px;color:#ffffff;letter-spacing:-0.214px;">master*</span>
<svg style="left:82.4px;top:1010.9px;" width="10.6" height="10.6" viewBox="0 0 16 16"><path d="M2.2 7 A5.3 5.3 0 0 1 12.4 5.6 M13.8 9 A5.3 5.3 0 0 1 3.6 10.4" fill="none" stroke="#fff" stroke-width="1.45"/><path d="M10 5.8 H13 V2.8 M6 10.2 H3 V13.2" fill="none" stroke="#fff" stroke-width="1.45"/></svg>
<svg style="left:103.8px;top:1011.2px;" width="9.8" height="9.8" viewBox="0 0 16 16"><circle cx="8" cy="8" r="6.6" fill="none" stroke="#fff" stroke-width="1.45"/><path d="M5.4 5.4 L10.6 10.6 M10.6 5.4 L5.4 10.6" stroke="#fff" stroke-width="1.45"/></svg>
<span style="left:115.80px;top:1012.00px;font-size:8.5px;line-height:8.5px;color:#ffffff;letter-spacing:-0.734px;">0</span>
<svg style="left:123px;top:1011.2px;" width="9.8" height="9.8" viewBox="0 0 16 16"><path d="M8 1.8 L14.8 14 H1.2 Z" fill="none" stroke="#fff" stroke-width="1.45" stroke-linejoin="round"/><path d="M8 6.4 V10.2 M8 11.4 V12.6" stroke="#fff" stroke-width="1.35"/></svg>
<span style="left:135.20px;top:1012.00px;font-size:8.5px;line-height:8.5px;color:#ffffff;letter-spacing:-0.662px;">282</span>
<span style="left:961.20px;top:1012.00px;font-size:8.5px;line-height:8.5px;color:#ffffff;letter-spacing:-0.314px;">Ln 279, Col 1</span>
<span style="left:1019.70px;top:1012.00px;font-size:8.5px;line-height:8.5px;color:#ffffff;letter-spacing:-0.512px;">Spaces: 2</span>
<span style="left:1064.80px;top:1012.00px;font-size:8.5px;line-height:8.5px;color:#ffffff;letter-spacing:-0.579px;">UTF-8</span>
<span style="left:1097.50px;top:1012.00px;font-size:8.5px;line-height:8.5px;color:#ffffff;letter-spacing:-1.101px;">CRLF</span>
<span style="left:1126.70px;top:1012.00px;font-size:8.5px;line-height:8.5px;color:#ffffff;letter-spacing:-0.015px;">Markdown</span>
<span style="left:1189.70px;top:1012.00px;font-size:8.5px;line-height:8.5px;color:#ffffff;letter-spacing:-0.226px;">Hungarian</span>
<svg style="left:1176.6px;top:1010.4px;" width="11" height="11" viewBox="0 0 16 16"><path d="M1 9.2 Q8 0.8 15 9.2" fill="none" stroke="#fff" stroke-width="1.5"/><circle cx="8" cy="9" r="2.7" fill="none" stroke="#fff" stroke-width="1.5"/></svg>
<svg style="left:1238.6px;top:1010.8px;" width="10.4" height="10.4" viewBox="0 0 16 16"><path d="M6.5 2 H14.6 V8.4 H12.4 L10.6 10.2 V8.4 H9.6" fill="none" stroke="#fff" stroke-width="1.35"/><circle cx="5" cy="7.2" r="2.2" fill="none" stroke="#fff" stroke-width="1.35"/><path d="M1 14.6 Q1.4 10.4 5 10.4 Q8.6 10.4 9 14.6" fill="none" stroke="#fff" stroke-width="1.35"/></svg>
<svg style="left:1259.6px;top:1010.8px;" width="10.4" height="10.4" viewBox="0 0 16 16"><path d="M3.6 11.4 V7 Q3.6 2.6 8 2.6 Q12.4 2.6 12.4 7 V11.4 L13.6 12.4 H2.4 Z M6.6 12.6 Q8 15 9.4 12.6" fill="none" stroke="#fff" stroke-width="1.4" stroke-linejoin="round"/></svg>
</div></body></html>
